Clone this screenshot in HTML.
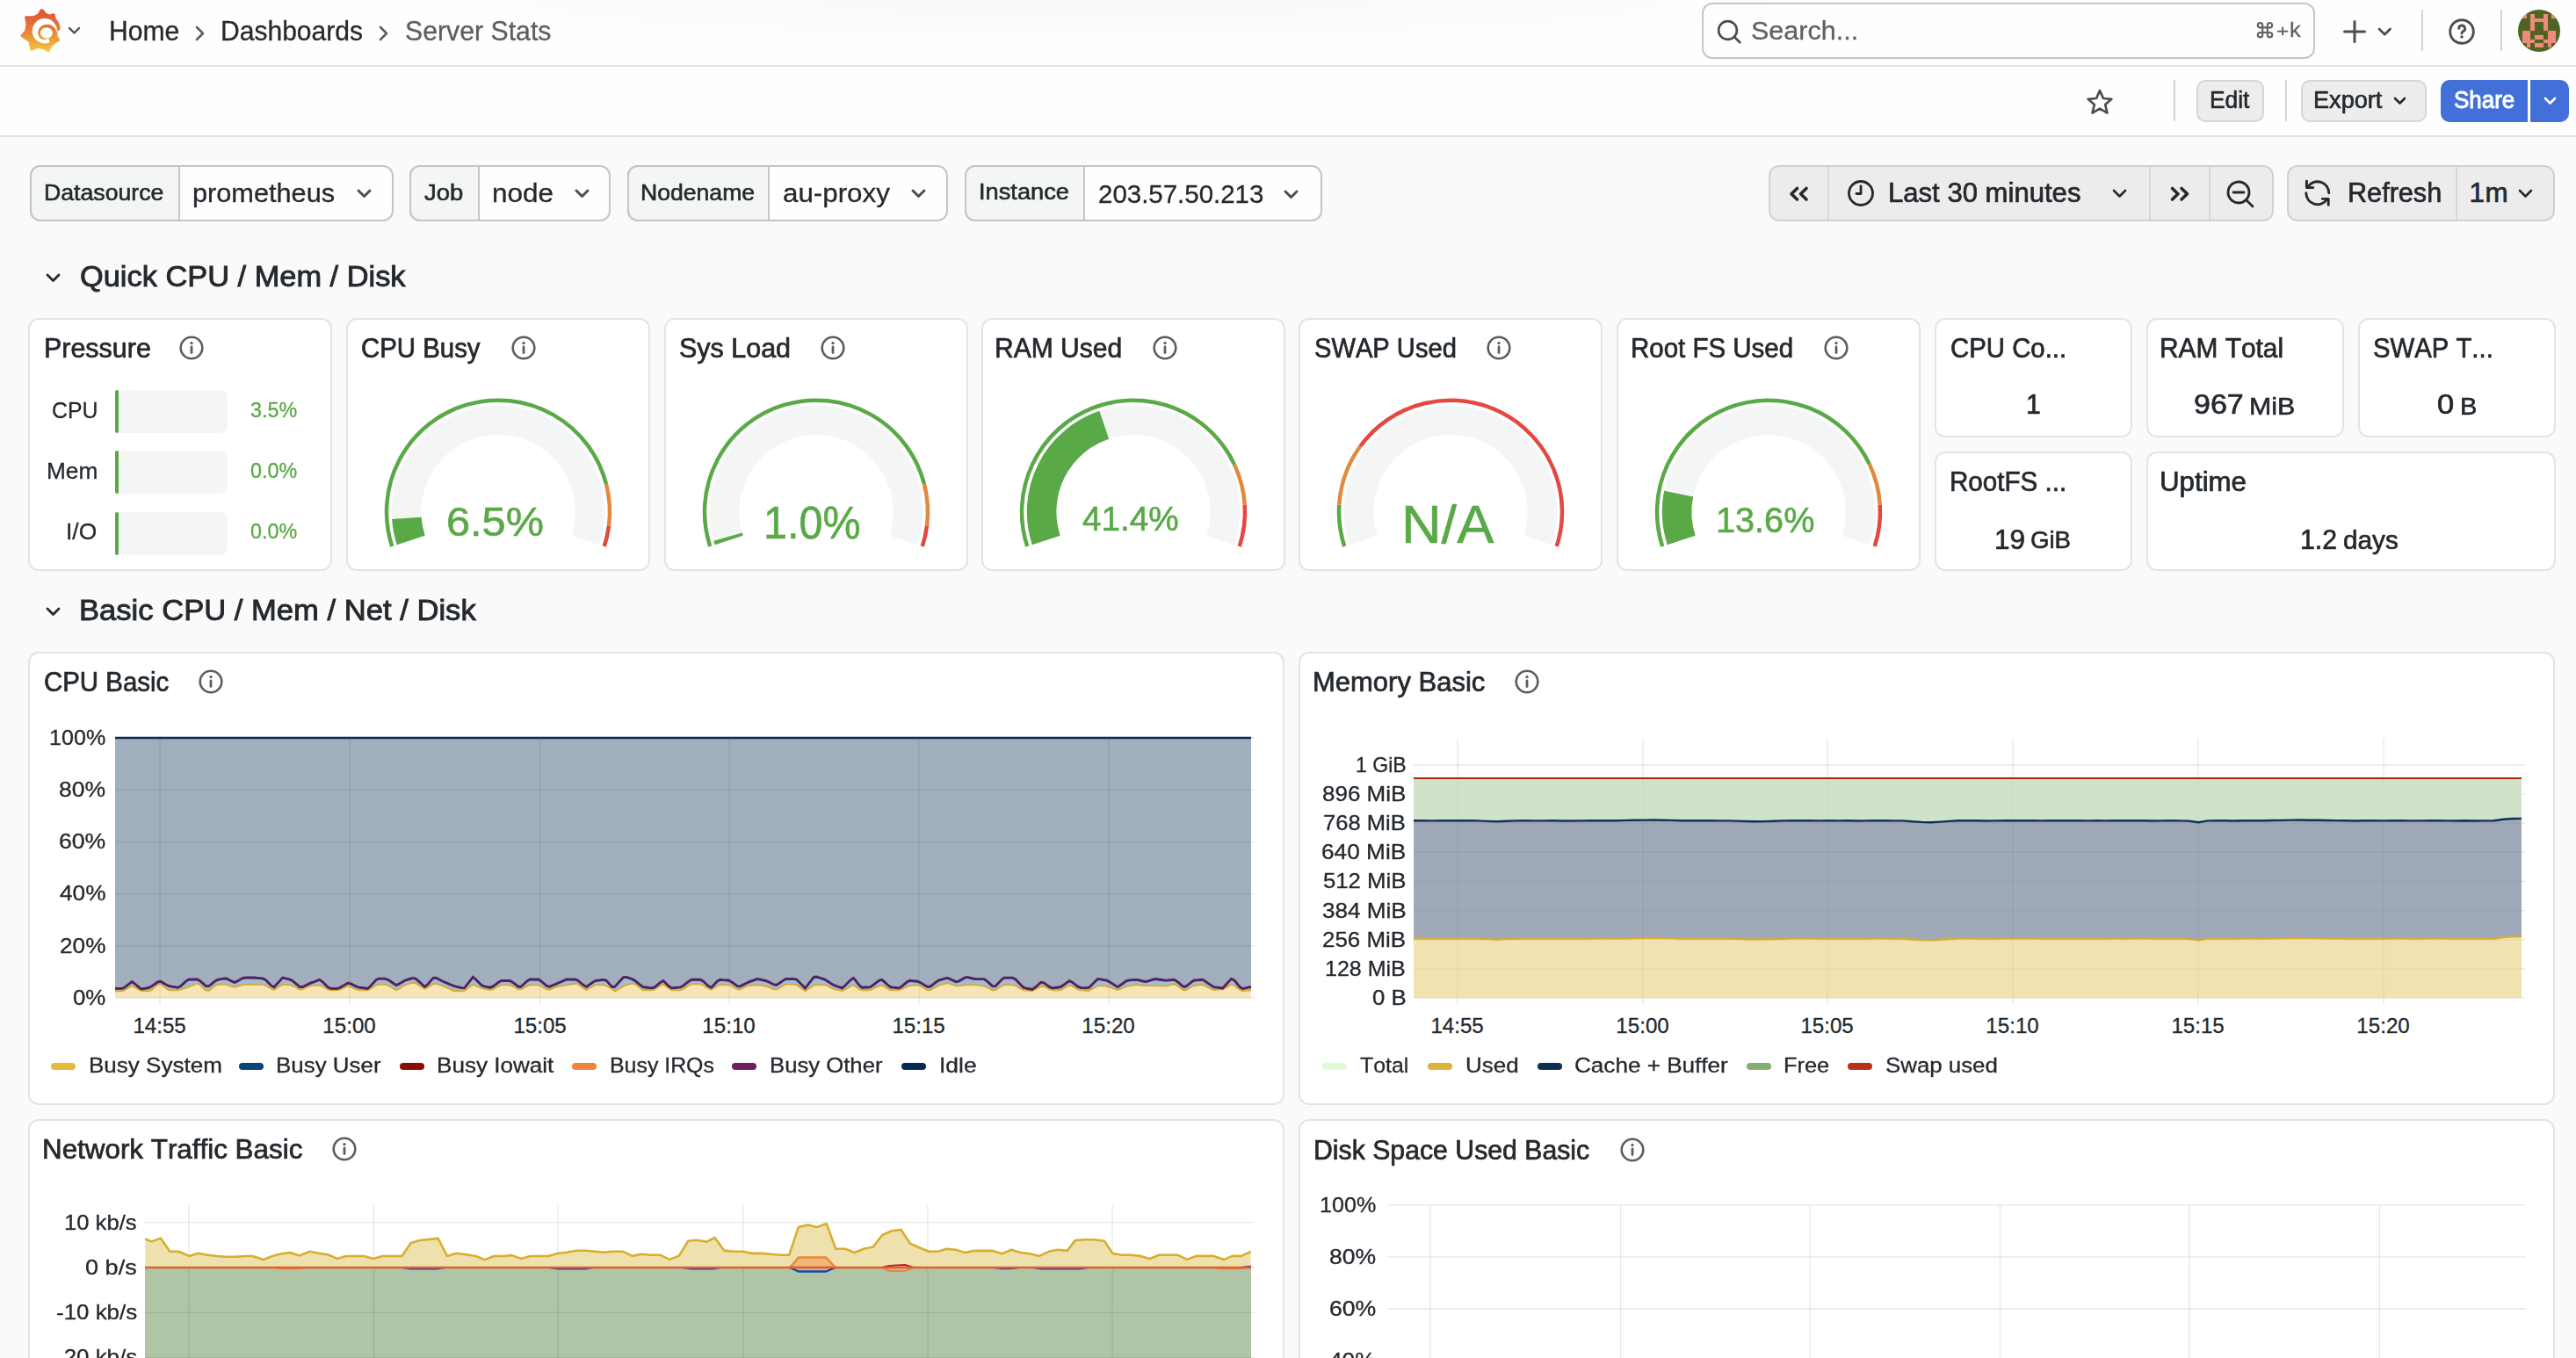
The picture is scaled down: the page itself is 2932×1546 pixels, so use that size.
<!DOCTYPE html><html><head><meta charset="utf-8"><style>
html,body{margin:0;padding:0;}
body{width:2932px;height:1546px;overflow:hidden;position:relative;background:#fafafa;font-family:"Liberation Sans",sans-serif;}
.t{position:absolute;white-space:pre;line-height:1;font-kerning:none;transform-origin:0 0;}
svg{overflow:visible}
</style></head><body>
<div style="position:absolute;left:0px;top:0px;width:2932px;height:74px;box-sizing:border-box;background:#fefefe;"></div>
<div style="position:absolute;left:0px;top:0px;width:2932px;height:74px;box-sizing:border-box;background:radial-gradient(ellipse 900px 55px at 1250px 0px, rgba(0,0,0,0.022), rgba(0,0,0,0) 100%);"></div>
<div style="position:absolute;left:0px;top:74px;width:2932px;height:2px;box-sizing:border-box;background:#e2e4e4;"></div>
<svg style="position:absolute;left:14px;top:4px;" width="80" height="66" viewBox="0 0 80 66"><defs><linearGradient id="lg" gradientUnits="userSpaceOnUse" x1="0" y1="6" x2="0" y2="56"><stop offset="0" stop-color="#e0512f"/><stop offset="0.45" stop-color="#e57a38"/><stop offset="1" stop-color="#f2cd3b"/></linearGradient>
<mask id="lm"><rect x="-10" y="-10" width="100" height="100" fill="white"/><circle cx="36.85" cy="31.25" r="14.15" fill="black"/></mask></defs><path d="M33.84,6.98 L35.83,8.37 L37.82,11.55 L42.59,13.54 L46.17,11.95 L47.76,12.35 L48.95,17.52 L51.74,21.50 L53.73,26.27 L53.53,30.04 L50.74,29.45 L50.74,37.80 L52.53,39.79 L53.33,41.77 L48.56,44.95 L43.79,48.93 L42.19,53.30 L41.00,54.50 L36.63,51.71 L29.47,50.12 L21.52,52.91 L21.12,52.51 L19.13,42.97 L10.39,37.40 L10.19,36.60 L15.16,30.64 L16.35,23.48 L14.76,15.53 L15.55,14.93 L24.70,14.74 L29.67,12.15 L32.65,7.18Z" fill="url(#lg)" stroke="url(#lg)" stroke-width="1.6" stroke-linejoin="round" mask="url(#lm)"/><path d="M43.30,45.67 L44.11,45.27 L44.90,44.83 L45.65,44.33 L46.36,43.78 L47.02,43.19 L47.64,42.55 L48.21,41.88 L48.73,41.17 L49.20,40.43 L49.61,39.66 L49.97,38.87 L50.27,38.06 L50.51,37.24 L50.69,36.40 L50.81,35.56 L50.87,34.71 L50.87,33.87 L50.78,33.03 L50.59,32.22 L50.34,31.42 L50.04,30.66 L49.69,29.93 L49.30,29.23 L48.86,28.57 L48.38,27.95 L47.86,27.37 L47.31,26.84 L46.73,26.36 L46.13,25.91 L45.53,25.48 L44.92,25.10 L44.28,24.77 L43.62,24.48 L42.95,24.24 L42.27,24.05 L41.58,23.91 L40.90,23.83 L40.21,23.78 L39.53,23.79 L38.85,23.85 L38.18,23.88 L37.52,23.96 L36.86,24.09 L36.21,24.26 L35.58,24.47 L34.97,24.73 L34.37,25.03 L33.80,25.37 L33.25,25.75 L32.74,26.16 L32.25,26.61 L31.78,27.08 L31.33,27.58 L30.92,28.10 L30.55,28.66 L30.22,29.24 L29.92,29.84 L29.67,30.47 L29.47,31.11 L29.30,31.77 L29.19,32.43 L29.12,33.11 L29.13,33.79 L29.23,34.46 L29.37,35.12 L29.56,35.77 L29.79,36.39 L30.06,37.00 L30.37,37.58 L30.72,38.14 L31.11,38.67 L31.53,39.17 L31.99,39.63 L32.49,40.04 L33.07,40.34 L33.67,40.59 L34.27,40.79 L34.87,40.94 L35.47,41.04 L36.06,41.10 L36.65,41.12 L37.23,41.09 L37.79,41.01 L38.33,40.90 L38.85,40.75 L39.35,40.57 L39.82,40.35 L40.27,40.11 L40.68,39.84 L41.07,39.54 L41.00,39.34 L40.56,39.43 L40.13,39.48 L39.70,39.50 L39.27,39.49 L38.85,39.45 L38.43,39.48 L38.00,39.48 L37.58,39.44 L37.15,39.38 L36.73,39.29 L36.31,39.16 L35.89,39.01 L35.49,38.82 L35.10,38.61 L34.72,38.37 L34.36,38.10 L34.01,37.80 L33.69,37.48 L33.39,37.14 L33.11,36.77 L32.85,36.38 L32.62,35.97 L32.42,35.54 L32.25,35.10 L32.11,34.64 L32.00,34.17 L31.93,33.69 L31.93,33.21 L32.00,32.73 L32.11,32.26 L32.25,31.80 L32.42,31.36 L32.62,30.93 L32.85,30.52 L33.11,30.13 L33.39,29.76 L33.69,29.42 L34.01,29.10 L34.36,28.80 L34.72,28.53 L35.10,28.29 L35.49,28.08 L35.89,27.89 L36.31,27.74 L36.73,27.61 L37.15,27.52 L37.58,27.46 L38.00,27.42 L38.43,27.42 L38.85,27.45 L39.27,27.42 L39.70,27.43 L40.12,27.46 L40.55,27.53 L40.97,27.62 L41.39,27.75 L41.80,27.91 L42.20,28.09 L42.59,28.30 L42.96,28.55 L43.32,28.82 L43.67,29.11 L43.99,29.44 L44.29,29.78 L44.57,30.15 L44.82,30.54 L45.04,30.95 L45.24,31.37 L45.41,31.81 L45.55,32.27 L45.65,32.74 L45.73,33.21 L45.73,33.69 L45.66,34.17 L45.56,34.63 L45.43,35.09 L45.27,35.53 L45.07,35.96 L44.85,36.38 L44.60,36.77 L44.33,37.15 L44.03,37.50 L43.71,37.83 L43.37,38.13 L43.01,38.41 L42.63,38.66 L42.24,38.88 L41.84,39.07 L41.43,39.24 L41.00,39.37Z" fill="url(#lg)"/></svg>
<svg style="position:absolute;left:75.5px;top:29.25px;" width="17" height="11.5" viewBox="0 0 17 11.5"><polyline points="3,3 8.5,8.5 14,3" fill="none" stroke="#4a4e52" stroke-width="2.4" stroke-linecap="round" stroke-linejoin="round"/></svg>
<span class="t" style="left:123.53px;top:20.26px;font-size:30.52px;color:#24292e;transform:scaleX(0.9863);-webkit-text-stroke:0.30px #24292e;">Home</span>
<svg style="position:absolute;left:220px;top:28px;" width="16" height="20" viewBox="0 0 16 20"><polyline points="4,3 11,10 4,17" fill="none" stroke="#5a5e62" stroke-width="2.6" stroke-linecap="round" stroke-linejoin="round"/></svg>
<span class="t" style="left:251.03px;top:20.26px;font-size:30.52px;color:#24292e;transform:scaleX(0.9846);-webkit-text-stroke:0.30px #24292e;">Dashboards</span>
<svg style="position:absolute;left:429px;top:28px;" width="16" height="20" viewBox="0 0 16 20"><polyline points="4,3 11,10 4,17" fill="none" stroke="#5a5e62" stroke-width="2.6" stroke-linecap="round" stroke-linejoin="round"/></svg>
<span class="t" style="left:460.63px;top:20.26px;font-size:30.52px;color:#5a5e62;transform:scaleX(0.9912);-webkit-text-stroke:0.30px #5a5e62;">Server Stats</span>
<div style="position:absolute;left:1937px;top:3px;width:698px;height:64px;box-sizing:border-box;border:2px solid #c4c6c8;border-radius:12px;background:#fefefe;"></div>
<svg style="position:absolute;left:1950px;top:18px;" width="36" height="36" viewBox="0 0 36 36"><circle cx="16.5" cy="16.5" r="10.4" fill="none" stroke="#4a4e53" stroke-width="2.7"/><line x1="24" y1="24" x2="30.3" y2="30.3" stroke="#4a4e53" stroke-width="2.7" stroke-linecap="round"/></svg>
<span class="t" style="left:1992.61px;top:20.30px;font-size:30.23px;color:#5e6266;transform:scaleX(1.0098);-webkit-text-stroke:0.30px #5e6266;">Search...</span>
<svg style="position:absolute;left:2566px;top:22px;" width="24" height="24" viewBox="0 0 24 24"><path d="M9.2,9.4 L14.8,9.4 L14.8,15.0 L9.2,15.0 Z M9.2,9.4 L9.2,6.7 A2.7,2.7 0 1 0 6.499999999999999,9.4 Z M14.8,9.4 L14.8,6.7 A2.7,2.7 0 1 1 17.5,9.4 Z M9.2,15.0 L9.2,17.7 A2.7,2.7 0 1 1 6.499999999999999,15.0 Z M14.8,15.0 L14.8,17.7 A2.7,2.7 0 1 0 17.5,15.0 Z" fill="none" stroke="#5e6266" stroke-width="2.1"/></svg>
<span class="t" style="left:2590.81px;top:27.73px;font-size:17.44px;color:#5e6266;transform:scaleX(1.3925);-webkit-text-stroke:0.30px #5e6266;">+</span>
<span class="t" style="left:2606.29px;top:22.25px;font-size:24.27px;color:#5e6266;transform:scaleX(1.0440);-webkit-text-stroke:0.30px #5e6266;">k</span>
<svg style="position:absolute;left:2664px;top:20px;" width="32" height="32" viewBox="0 0 32 32"><line x1="16" y1="4.5" x2="16" y2="27.5" stroke="#4a4e53" stroke-width="3" stroke-linecap="round"/><line x1="4.5" y1="16" x2="27.5" y2="16" stroke="#4a4e53" stroke-width="3" stroke-linecap="round"/></svg>
<svg style="position:absolute;left:2704.75px;top:29.875px;" width="18.5" height="12.25" viewBox="0 0 18.5 12.25"><polyline points="3,3 9.25,9.25 15.5,3" fill="none" stroke="#4a4e53" stroke-width="2.8" stroke-linecap="round" stroke-linejoin="round"/></svg>
<div style="position:absolute;left:2756px;top:11px;width:2px;height:47px;box-sizing:border-box;background:#d2d4d6;"></div>
<svg style="position:absolute;left:2786px;top:20px;" width="32" height="32" viewBox="0 0 32 32"><circle cx="16" cy="16" r="13.3" fill="none" stroke="#4a4e53" stroke-width="2.9"/><path d="M12.6,12.4 a3.5,3.5 0 1 1 4.9,3.3 c-1,0.5 -1.5,1 -1.5,2.4" fill="none" stroke="#4a4e53" stroke-width="2.9" stroke-linecap="round"/><circle cx="16" cy="22" r="1.8" fill="#4a4e53"/></svg>
<div style="position:absolute;left:2846px;top:11px;width:2px;height:47px;box-sizing:border-box;background:#d2d4d6;"></div>
<svg style="position:absolute;left:2866px;top:11px;" width="48" height="48" viewBox="0 0 48 48"><defs><clipPath id="avc"><circle cx="24" cy="24" r="24"/></clipPath></defs><g clip-path="url(#avc)"><rect width="48" height="48" fill="#4f6420"/><rect x="4.80" y="4.80" width="4.8" height="4.8" fill="#ee8a7c" shape-rendering="crispEdges"/><rect x="14.40" y="4.80" width="4.8" height="4.8" fill="#ee8a7c" shape-rendering="crispEdges"/><rect x="28.80" y="4.80" width="4.8" height="4.8" fill="#ee8a7c" shape-rendering="crispEdges"/><rect x="38.40" y="4.80" width="4.8" height="4.8" fill="#ee8a7c" shape-rendering="crispEdges"/><rect x="14.40" y="9.60" width="4.8" height="4.8" fill="#ee8a7c" shape-rendering="crispEdges"/><rect x="19.20" y="9.60" width="4.8" height="4.8" fill="#ee8a7c" shape-rendering="crispEdges"/><rect x="24.00" y="9.60" width="4.8" height="4.8" fill="#ee8a7c" shape-rendering="crispEdges"/><rect x="28.80" y="9.60" width="4.8" height="4.8" fill="#ee8a7c" shape-rendering="crispEdges"/><rect x="14.40" y="14.40" width="4.8" height="4.8" fill="#ee8a7c" shape-rendering="crispEdges"/><rect x="28.80" y="14.40" width="4.8" height="4.8" fill="#ee8a7c" shape-rendering="crispEdges"/><rect x="14.40" y="19.20" width="4.8" height="4.8" fill="#ee8a7c" shape-rendering="crispEdges"/><rect x="28.80" y="19.20" width="4.8" height="4.8" fill="#ee8a7c" shape-rendering="crispEdges"/><rect x="4.80" y="24.00" width="4.8" height="4.8" fill="#ee8a7c" shape-rendering="crispEdges"/><rect x="9.60" y="24.00" width="4.8" height="4.8" fill="#ee8a7c" shape-rendering="crispEdges"/><rect x="33.60" y="24.00" width="4.8" height="4.8" fill="#ee8a7c" shape-rendering="crispEdges"/><rect x="38.40" y="24.00" width="4.8" height="4.8" fill="#ee8a7c" shape-rendering="crispEdges"/><rect x="4.80" y="28.80" width="4.8" height="4.8" fill="#ee8a7c" shape-rendering="crispEdges"/><rect x="9.60" y="28.80" width="4.8" height="4.8" fill="#ee8a7c" shape-rendering="crispEdges"/><rect x="19.20" y="28.80" width="4.8" height="4.8" fill="#ee8a7c" shape-rendering="crispEdges"/><rect x="24.00" y="28.80" width="4.8" height="4.8" fill="#ee8a7c" shape-rendering="crispEdges"/><rect x="33.60" y="28.80" width="4.8" height="4.8" fill="#ee8a7c" shape-rendering="crispEdges"/><rect x="38.40" y="28.80" width="4.8" height="4.8" fill="#ee8a7c" shape-rendering="crispEdges"/><rect x="4.80" y="33.60" width="4.8" height="4.8" fill="#ee8a7c" shape-rendering="crispEdges"/><rect x="9.60" y="33.60" width="4.8" height="4.8" fill="#ee8a7c" shape-rendering="crispEdges"/><rect x="14.40" y="33.60" width="4.8" height="4.8" fill="#ee8a7c" shape-rendering="crispEdges"/><rect x="28.80" y="33.60" width="4.8" height="4.8" fill="#ee8a7c" shape-rendering="crispEdges"/><rect x="33.60" y="33.60" width="4.8" height="4.8" fill="#ee8a7c" shape-rendering="crispEdges"/><rect x="38.40" y="33.60" width="4.8" height="4.8" fill="#ee8a7c" shape-rendering="crispEdges"/><rect x="9.60" y="38.40" width="4.8" height="4.8" fill="#ee8a7c" shape-rendering="crispEdges"/><rect x="19.20" y="38.40" width="4.8" height="4.8" fill="#ee8a7c" shape-rendering="crispEdges"/><rect x="24.00" y="38.40" width="4.8" height="4.8" fill="#ee8a7c" shape-rendering="crispEdges"/><rect x="33.60" y="38.40" width="4.8" height="4.8" fill="#ee8a7c" shape-rendering="crispEdges"/></g></svg>
<div style="position:absolute;left:0px;top:76px;width:2932px;height:78px;box-sizing:border-box;background:#fefefe;"></div>
<div style="position:absolute;left:0px;top:154px;width:2932px;height:2px;box-sizing:border-box;background:#e2e4e4;"></div>
<svg style="position:absolute;left:2369px;top:97px;" width="42" height="40" viewBox="0 0 42 40"><g transform="translate(21,19) scale(0.86) translate(-21,-19)"><path d="M21,4 L25.6,14.3 L36.6,15.3 L28.2,22.6 L30.8,33.6 L21,27.8 L11.2,33.6 L13.8,22.6 L5.4,15.3 L16.4,14.3 Z" fill="none" stroke="#4a4e53" stroke-width="3.1" stroke-linejoin="round"/></g></svg>
<div style="position:absolute;left:2474px;top:91px;width:2px;height:47px;box-sizing:border-box;background:#d2d4d6;"></div>
<div style="position:absolute;left:2500px;top:91px;width:77px;height:48px;box-sizing:border-box;background:#ededed;border:2px solid #d5d6d7;border-radius:10px;"></div>
<span class="t" style="left:2514.84px;top:100.76px;font-size:26.74px;color:#24292e;transform:scaleX(0.9841);-webkit-text-stroke:0.59px #24292e;">Edit</span>
<div style="position:absolute;left:2601px;top:91px;width:2px;height:47px;box-sizing:border-box;background:#d2d4d6;"></div>
<div style="position:absolute;left:2619px;top:91px;width:143px;height:48px;box-sizing:border-box;background:#ededed;border:2px solid #d5d6d7;border-radius:10px;"></div>
<span class="t" style="left:2632.77px;top:100.76px;font-size:26.74px;color:#24292e;transform:scaleX(1.0146);-webkit-text-stroke:0.59px #24292e;">Export</span>
<svg style="position:absolute;left:2723.0px;top:109.25px;" width="17" height="11.5" viewBox="0 0 17 11.5"><polyline points="3,3 8.5,8.5 14,3" fill="none" stroke="#24292e" stroke-width="2.6" stroke-linecap="round" stroke-linejoin="round"/></svg>
<div style="position:absolute;left:2778px;top:91px;width:146px;height:48px;box-sizing:border-box;background:#4270d8;border-radius:10px;"></div>
<div style="position:absolute;left:2877px;top:91px;width:3px;height:48px;box-sizing:border-box;background:#fefefe;"></div>
<span class="t" style="left:2792.82px;top:100.76px;font-size:26.74px;color:#ffffff;transform:scaleX(0.9715);-webkit-text-stroke:0.90px #ffffff;">Share</span>
<svg style="position:absolute;left:2894.0px;top:109.25px;" width="17" height="11.5" viewBox="0 0 17 11.5"><polyline points="3,3 8.5,8.5 14,3" fill="none" stroke="#ffffff" stroke-width="2.6" stroke-linecap="round" stroke-linejoin="round"/></svg>
<div style="position:absolute;left:0px;top:156px;width:2932px;height:1390px;box-sizing:border-box;background:#fafafa;"></div>
<div style="position:absolute;left:34px;top:188px;width:414px;height:64px;box-sizing:border-box;border:2px solid #c3c5c7;border-radius:12px;background:#fefefe;"></div>
<div style="position:absolute;left:34px;top:188px;width:171px;height:64px;box-sizing:border-box;border:2px solid #c3c5c7;border-radius:12px 0 0 12px;background:#f4f5f5;"></div>
<span class="t" style="left:50.31px;top:206.89px;font-size:25.29px;color:#24292e;transform:scaleX(1.0544);-webkit-text-stroke:0.56px #24292e;">Datasource</span>
<span class="t" style="left:219.02px;top:205.27px;font-size:29.80px;color:#24292e;transform:scaleX(1.0301);-webkit-text-stroke:0.30px #24292e;">prometheus</span>
<svg style="position:absolute;left:404.5px;top:213.75px;" width="19" height="12.5" viewBox="0 0 19 12.5"><polyline points="3,3 9.5,9.5 16,3" fill="none" stroke="#4a4e53" stroke-width="3" stroke-linecap="round" stroke-linejoin="round"/></svg>
<div style="position:absolute;left:466px;top:188px;width:229px;height:64px;box-sizing:border-box;border:2px solid #c3c5c7;border-radius:12px;background:#fefefe;"></div>
<div style="position:absolute;left:466px;top:188px;width:80px;height:64px;box-sizing:border-box;border:2px solid #c3c5c7;border-radius:12px 0 0 12px;background:#f4f5f5;"></div>
<span class="t" style="left:483.37px;top:206.89px;font-size:25.29px;color:#24292e;transform:scaleX(1.0860);-webkit-text-stroke:0.56px #24292e;">Job</span>
<span class="t" style="left:559.91px;top:205.27px;font-size:29.80px;color:#24292e;transform:scaleX(1.0558);-webkit-text-stroke:0.30px #24292e;">node</span>
<svg style="position:absolute;left:653.0px;top:213.75px;" width="19" height="12.5" viewBox="0 0 19 12.5"><polyline points="3,3 9.5,9.5 16,3" fill="none" stroke="#4a4e53" stroke-width="3" stroke-linecap="round" stroke-linejoin="round"/></svg>
<div style="position:absolute;left:714px;top:188px;width:365px;height:64px;box-sizing:border-box;border:2px solid #c3c5c7;border-radius:12px;background:#fefefe;"></div>
<div style="position:absolute;left:714px;top:188px;width:162px;height:64px;box-sizing:border-box;border:2px solid #c3c5c7;border-radius:12px 0 0 12px;background:#f4f5f5;"></div>
<span class="t" style="left:729.22px;top:206.89px;font-size:25.29px;color:#24292e;transform:scaleX(1.0520);-webkit-text-stroke:0.56px #24292e;">Nodename</span>
<span class="t" style="left:891.07px;top:205.27px;font-size:29.80px;color:#24292e;transform:scaleX(1.0506);-webkit-text-stroke:0.30px #24292e;">au-proxy</span>
<svg style="position:absolute;left:1036.0px;top:213.75px;" width="19" height="12.5" viewBox="0 0 19 12.5"><polyline points="3,3 9.5,9.5 16,3" fill="none" stroke="#4a4e53" stroke-width="3" stroke-linecap="round" stroke-linejoin="round"/></svg>
<div style="position:absolute;left:1098px;top:188px;width:407px;height:64px;box-sizing:border-box;border:2px solid #c3c5c7;border-radius:12px;background:#fefefe;"></div>
<div style="position:absolute;left:1098px;top:188px;width:137px;height:64px;box-sizing:border-box;border:2px solid #c3c5c7;border-radius:12px 0 0 12px;background:#f4f5f5;"></div>
<span class="t" style="left:1113.88px;top:206.49px;font-size:25.29px;color:#24292e;transform:scaleX(1.0776);-webkit-text-stroke:0.56px #24292e;">Instance</span>
<span class="t" style="left:1249.92px;top:206.17px;font-size:29.80px;color:#24292e;transform:scaleX(0.9886);-webkit-text-stroke:0.30px #24292e;">203.57.50.213</span>
<svg style="position:absolute;left:1460.0px;top:214.75px;" width="19" height="12.5" viewBox="0 0 19 12.5"><polyline points="3,3 9.5,9.5 16,3" fill="none" stroke="#4a4e53" stroke-width="3" stroke-linecap="round" stroke-linejoin="round"/></svg>
<div style="position:absolute;left:2013px;top:188px;width:575px;height:64px;box-sizing:border-box;border:2px solid #cfd1d2;border-radius:12px;background:#ececed;"></div>
<div style="position:absolute;left:2080px;top:190px;width:2px;height:60px;box-sizing:border-box;background:#d5d7d8;"></div>
<div style="position:absolute;left:2446px;top:190px;width:2px;height:60px;box-sizing:border-box;background:#d5d7d8;"></div>
<div style="position:absolute;left:2514px;top:190px;width:2px;height:60px;box-sizing:border-box;background:#d5d7d8;"></div>
<svg style="position:absolute;left:2030px;top:204px;" width="36" height="34" viewBox="0 0 36 34"><polyline points="15.5,10.5 9,16.8 15.5,23" fill="none" stroke="#24292e" stroke-width="3.6" stroke-linecap="round" stroke-linejoin="round"/><polyline points="26,10.5 19.5,16.8 26,23" fill="none" stroke="#24292e" stroke-width="3.6" stroke-linecap="round" stroke-linejoin="round"/></svg>
<svg style="position:absolute;left:2100px;top:202px;" width="36" height="36" viewBox="0 0 36 36"><circle cx="18" cy="18" r="13.5" fill="none" stroke="#24292e" stroke-width="2.8"/><polyline points="18,10 18,18.5 13,18.5" fill="none" stroke="#24292e" stroke-width="2.8" stroke-linecap="round" stroke-linejoin="round"/></svg>
<span class="t" style="left:2149.15px;top:203.62px;font-size:31.40px;color:#24292e;transform:scaleX(0.9902);-webkit-text-stroke:0.69px #24292e;">Last 30 minutes</span>
<svg style="position:absolute;left:2402.5px;top:213.75px;" width="19" height="12.5" viewBox="0 0 19 12.5"><polyline points="3,3 9.5,9.5 16,3" fill="none" stroke="#24292e" stroke-width="2.6" stroke-linecap="round" stroke-linejoin="round"/></svg>
<svg style="position:absolute;left:2462px;top:204px;" width="36" height="34" viewBox="0 0 36 34"><polyline points="10.5,10.5 17,16.8 10.5,23" fill="none" stroke="#24292e" stroke-width="3.6" stroke-linecap="round" stroke-linejoin="round"/><polyline points="21,10.5 27.5,16.8 21,23" fill="none" stroke="#24292e" stroke-width="3.6" stroke-linecap="round" stroke-linejoin="round"/></svg>
<svg style="position:absolute;left:2532px;top:203px;" width="38" height="38" viewBox="0 0 38 38"><circle cx="16" cy="16" r="12" fill="none" stroke="#24292e" stroke-width="2.8"/><line x1="10" y1="16" x2="22" y2="16" stroke="#24292e" stroke-width="2.8" stroke-linecap="round"/><line x1="25" y1="25" x2="32" y2="32" stroke="#24292e" stroke-width="2.8" stroke-linecap="round"/></svg>
<div style="position:absolute;left:2603px;top:188px;width:305px;height:64px;box-sizing:border-box;border:2px solid #cfd1d2;border-radius:12px;background:#ececed;"></div>
<div style="position:absolute;left:2795px;top:190px;width:2px;height:60px;box-sizing:border-box;background:#d5d7d8;"></div>
<svg style="position:absolute;left:2620px;top:202px;" width="38" height="38" viewBox="0 0 38 38"><path d="M7.15,10.34 A13,13 0 0 1 30.8,17.8" fill="none" stroke="#24292e" stroke-width="2.9" stroke-linecap="round"/><polyline points="5.4,4.2 5.4,11.6 12.8,11.6" fill="none" stroke="#24292e" stroke-width="2.9" stroke-linecap="round" stroke-linejoin="round"/><path d="M4.8,17.8 A13,13 0 0 0 28.45,25.26" fill="none" stroke="#24292e" stroke-width="2.9" stroke-linecap="round"/><polyline points="23.4,24.4 30.2,24.4 30.2,31.4" fill="none" stroke="#24292e" stroke-width="2.9" stroke-linecap="round" stroke-linejoin="round"/></svg>
<span class="t" style="left:2671.79px;top:203.62px;font-size:31.40px;color:#24292e;transform:scaleX(0.9751);-webkit-text-stroke:0.69px #24292e;">Refresh</span>
<span class="t" style="left:2810.61px;top:203.62px;font-size:31.40px;color:#24292e;-webkit-text-stroke:0.69px #24292e;">1</span>
<span class="t" style="left:2828.42px;top:203.62px;font-size:31.40px;color:#24292e;-webkit-text-stroke:0.69px #24292e;">m</span>
<svg style="position:absolute;left:2865.0px;top:213.75px;" width="19" height="12.5" viewBox="0 0 19 12.5"><polyline points="3,3 9.5,9.5 16,3" fill="none" stroke="#24292e" stroke-width="2.6" stroke-linecap="round" stroke-linejoin="round"/></svg>
<svg style="position:absolute;left:50.7px;top:309.84999999999997px;" width="19" height="12.5" viewBox="0 0 19 12.5"><polyline points="3,3 9.5,9.5 16,3" fill="none" stroke="#24292e" stroke-width="2.8" stroke-linecap="round" stroke-linejoin="round"/></svg>
<span class="t" style="left:91.37px;top:298.22px;font-size:33.87px;color:#24292e;transform:scaleX(1.0152);-webkit-text-stroke:0.90px #24292e;">Quick CPU / Mem / Disk</span>
<svg style="position:absolute;left:50.7px;top:689.6500000000001px;" width="19" height="12.5" viewBox="0 0 19 12.5"><polyline points="3,3 9.5,9.5 16,3" fill="none" stroke="#24292e" stroke-width="2.8" stroke-linecap="round" stroke-linejoin="round"/></svg>
<span class="t" style="left:90.16px;top:678.02px;font-size:33.87px;color:#24292e;transform:scaleX(1.0216);-webkit-text-stroke:0.90px #24292e;">Basic CPU / Mem / Net / Disk</span>
<div style="position:absolute;left:32px;top:362px;width:346px;height:288px;box-sizing:border-box;background:#ffffff;border:2px solid #e3e4e5;border-radius:12px;"></div>
<div style="position:absolute;left:394px;top:362px;width:346px;height:288px;box-sizing:border-box;background:#ffffff;border:2px solid #e3e4e5;border-radius:12px;"></div>
<div style="position:absolute;left:756px;top:362px;width:346px;height:288px;box-sizing:border-box;background:#ffffff;border:2px solid #e3e4e5;border-radius:12px;"></div>
<div style="position:absolute;left:1117px;top:362px;width:346px;height:288px;box-sizing:border-box;background:#ffffff;border:2px solid #e3e4e5;border-radius:12px;"></div>
<div style="position:absolute;left:1478px;top:362px;width:346px;height:288px;box-sizing:border-box;background:#ffffff;border:2px solid #e3e4e5;border-radius:12px;"></div>
<div style="position:absolute;left:1840px;top:362px;width:346px;height:288px;box-sizing:border-box;background:#ffffff;border:2px solid #e3e4e5;border-radius:12px;"></div>
<div style="position:absolute;left:2202px;top:362px;width:225px;height:136px;box-sizing:border-box;background:#ffffff;border:2px solid #e3e4e5;border-radius:12px;"></div>
<div style="position:absolute;left:2443px;top:362px;width:225px;height:136px;box-sizing:border-box;background:#ffffff;border:2px solid #e3e4e5;border-radius:12px;"></div>
<div style="position:absolute;left:2684px;top:362px;width:225px;height:136px;box-sizing:border-box;background:#ffffff;border:2px solid #e3e4e5;border-radius:12px;"></div>
<div style="position:absolute;left:2202px;top:514px;width:225px;height:136px;box-sizing:border-box;background:#ffffff;border:2px solid #e3e4e5;border-radius:12px;"></div>
<div style="position:absolute;left:2443px;top:514px;width:466px;height:136px;box-sizing:border-box;background:#ffffff;border:2px solid #e3e4e5;border-radius:12px;"></div>
<span class="t" style="left:49.50px;top:381.16px;font-size:30.52px;color:#24292e;transform:scaleX(0.9976);-webkit-text-stroke:0.70px #24292e;">Pressure</span>
<svg style="position:absolute;left:202px;top:380px;" width="32" height="32" viewBox="0 0 32 32"><circle cx="16" cy="16" r="12.3" fill="none" stroke="#5a5e62" stroke-width="2.6"/><line x1="16" y1="15" x2="16" y2="21.5" stroke="#5a5e62" stroke-width="2.8" stroke-linecap="round"/><circle cx="16" cy="10.6" r="1.7" fill="#5a5e62"/></svg>
<span class="t" style="left:411.01px;top:381.16px;font-size:30.52px;color:#24292e;transform:scaleX(0.9628);-webkit-text-stroke:0.70px #24292e;">CPU Busy</span>
<svg style="position:absolute;left:579.5px;top:380px;" width="32" height="32" viewBox="0 0 32 32"><circle cx="16" cy="16" r="12.3" fill="none" stroke="#5a5e62" stroke-width="2.6"/><line x1="16" y1="15" x2="16" y2="21.5" stroke="#5a5e62" stroke-width="2.8" stroke-linecap="round"/><circle cx="16" cy="10.6" r="1.7" fill="#5a5e62"/></svg>
<span class="t" style="left:773.12px;top:381.16px;font-size:30.52px;color:#24292e;transform:scaleX(0.9983);-webkit-text-stroke:0.70px #24292e;">Sys Load</span>
<svg style="position:absolute;left:931.7px;top:380px;" width="32" height="32" viewBox="0 0 32 32"><circle cx="16" cy="16" r="12.3" fill="none" stroke="#5a5e62" stroke-width="2.6"/><line x1="16" y1="15" x2="16" y2="21.5" stroke="#5a5e62" stroke-width="2.8" stroke-linecap="round"/><circle cx="16" cy="10.6" r="1.7" fill="#5a5e62"/></svg>
<span class="t" style="left:1132.34px;top:381.16px;font-size:30.52px;color:#24292e;transform:scaleX(0.9833);-webkit-text-stroke:0.70px #24292e;">RAM Used</span>
<svg style="position:absolute;left:1310px;top:380px;" width="32" height="32" viewBox="0 0 32 32"><circle cx="16" cy="16" r="12.3" fill="none" stroke="#5a5e62" stroke-width="2.6"/><line x1="16" y1="15" x2="16" y2="21.5" stroke="#5a5e62" stroke-width="2.8" stroke-linecap="round"/><circle cx="16" cy="10.6" r="1.7" fill="#5a5e62"/></svg>
<span class="t" style="left:1495.58px;top:381.16px;font-size:30.52px;color:#24292e;transform:scaleX(0.9545);-webkit-text-stroke:0.70px #24292e;">SWAP Used</span>
<svg style="position:absolute;left:1689.5px;top:380px;" width="32" height="32" viewBox="0 0 32 32"><circle cx="16" cy="16" r="12.3" fill="none" stroke="#5a5e62" stroke-width="2.6"/><line x1="16" y1="15" x2="16" y2="21.5" stroke="#5a5e62" stroke-width="2.8" stroke-linecap="round"/><circle cx="16" cy="10.6" r="1.7" fill="#5a5e62"/></svg>
<span class="t" style="left:1856.38px;top:381.16px;font-size:30.52px;color:#24292e;transform:scaleX(0.9657);-webkit-text-stroke:0.70px #24292e;">Root FS Used</span>
<svg style="position:absolute;left:2073.5px;top:380px;" width="32" height="32" viewBox="0 0 32 32"><circle cx="16" cy="16" r="12.3" fill="none" stroke="#5a5e62" stroke-width="2.6"/><line x1="16" y1="15" x2="16" y2="21.5" stroke="#5a5e62" stroke-width="2.8" stroke-linecap="round"/><circle cx="16" cy="10.6" r="1.7" fill="#5a5e62"/></svg>
<span class="t" style="left:2219.51px;top:381.16px;font-size:30.52px;color:#24292e;transform:scaleX(0.9620);-webkit-text-stroke:0.70px #24292e;">CPU Co...</span>
<span class="t" style="left:2458.35px;top:381.16px;font-size:30.52px;color:#24292e;transform:scaleX(0.9784);-webkit-text-stroke:0.70px #24292e;">RAM Total</span>
<span class="t" style="left:2701.17px;top:381.16px;font-size:30.52px;color:#24292e;transform:scaleX(0.9604);-webkit-text-stroke:0.70px #24292e;">SWAP T...</span>
<span class="t" style="left:2218.57px;top:532.86px;font-size:30.52px;color:#24292e;transform:scaleX(0.9689);-webkit-text-stroke:0.70px #24292e;">RootFS ...</span>
<span class="t" style="left:2458.39px;top:532.86px;font-size:30.52px;color:#24292e;transform:scaleX(1.0240);-webkit-text-stroke:0.70px #24292e;">Uptime</span>
<span class="t" style="left:58.54px;top:455.36px;font-size:25.44px;color:#24292e;transform:scaleX(0.9772);-webkit-text-stroke:0.30px #24292e;">CPU</span>
<div style="position:absolute;left:131px;top:444px;width:128px;height:49px;box-sizing:border-box;background:#f4f5f5;border-radius:4px 8px 8px 4px;"></div>
<div style="position:absolute;left:131px;top:444px;width:4px;height:49px;box-sizing:border-box;background:#5aa947;border-radius:2px;"></div>
<span class="t" style="left:284.91px;top:456.36px;font-size:23.55px;color:#5aa947;transform:scaleX(0.9897);-webkit-text-stroke:0.30px #5aa947;">3.5%</span>
<span class="t" style="left:52.55px;top:524.16px;font-size:25.44px;color:#24292e;transform:scaleX(1.0311);-webkit-text-stroke:0.30px #24292e;">Mem</span>
<div style="position:absolute;left:131px;top:513px;width:128px;height:49px;box-sizing:border-box;background:#f4f5f5;border-radius:4px 8px 8px 4px;"></div>
<div style="position:absolute;left:131px;top:513px;width:4px;height:49px;box-sizing:border-box;background:#5aa947;border-radius:2px;"></div>
<span class="t" style="left:284.89px;top:525.16px;font-size:23.55px;color:#5aa947;transform:scaleX(0.9902);-webkit-text-stroke:0.30px #5aa947;">0.0%</span>
<span class="t" style="left:75.16px;top:593.26px;font-size:25.44px;color:#24292e;transform:scaleX(1.0377);-webkit-text-stroke:0.30px #24292e;">I/O</span>
<div style="position:absolute;left:131px;top:583px;width:128px;height:49px;box-sizing:border-box;background:#f4f5f5;border-radius:4px 8px 8px 4px;"></div>
<div style="position:absolute;left:131px;top:583px;width:4px;height:49px;box-sizing:border-box;background:#5aa947;border-radius:2px;"></div>
<span class="t" style="left:284.89px;top:594.26px;font-size:23.55px;color:#5aa947;transform:scaleX(0.9902);-webkit-text-stroke:0.30px #5aa947;">0.0%</span>
<svg style="position:absolute;left:427px;top:442px;" width="280" height="200" viewBox="0 0 280 200"><path d="M19.22,179.95 A127.0,127.0 0 1 1 263.01,109.12" fill="none" stroke="#5aa947" stroke-width="4.5"/><path d="M263.01,109.12 A127.0,127.0 0 0 1 266.00,156.62" fill="none" stroke="#e2893d" stroke-width="4.5"/><path d="M266.00,156.62 A127.0,127.0 0 0 1 260.78,179.95" fill="none" stroke="#e34841" stroke-width="4.5"/><path d="M40.71,172.96 A104.4,104.4 0 1 1 239.29,172.96" fill="none" stroke="#f4f5f5" stroke-width="33.6"/><path d="M40.71,172.96 A104.4,104.4 0 0 1 35.85,147.91" fill="none" stroke="#5aa947" stroke-width="33.6"/></svg>
<span class="t" style="left:508.03px;top:571.25px;font-size:46.95px;color:#5aa947;transform:scaleX(1.0374);-webkit-text-stroke:0.60px #5aa947;">6.5%</span>
<svg style="position:absolute;left:789px;top:442px;" width="280" height="200" viewBox="0 0 280 200"><path d="M19.22,179.95 A127.0,127.0 0 1 1 263.01,109.12" fill="none" stroke="#5aa947" stroke-width="4.5"/><path d="M263.01,109.12 A127.0,127.0 0 0 1 266.00,156.62" fill="none" stroke="#e2893d" stroke-width="4.5"/><path d="M266.00,156.62 A127.0,127.0 0 0 1 260.78,179.95" fill="none" stroke="#e34841" stroke-width="4.5"/><path d="M40.71,172.96 A104.4,104.4 0 1 1 239.29,172.96" fill="none" stroke="#f4f5f5" stroke-width="33.6"/><path d="M40.71,172.96 A104.4,104.4 0 0 1 39.56,169.20" fill="none" stroke="#5aa947" stroke-width="33.6"/></svg>
<span class="t" style="left:869.10px;top:570.48px;font-size:51.16px;color:#5aa947;transform:scaleX(0.9486);-webkit-text-stroke:0.60px #5aa947;">1.0%</span>
<svg style="position:absolute;left:1150px;top:442px;" width="280" height="200" viewBox="0 0 280 200"><path d="M19.22,179.95 A127.0,127.0 0 0 1 254.91,86.63" fill="none" stroke="#5aa947" stroke-width="4.5"/><path d="M254.91,86.63 A127.0,127.0 0 0 1 266.75,132.73" fill="none" stroke="#e2893d" stroke-width="4.5"/><path d="M266.75,132.73 A127.0,127.0 0 0 1 260.78,179.95" fill="none" stroke="#e34841" stroke-width="4.5"/><path d="M40.71,172.96 A104.4,104.4 0 1 1 239.29,172.96" fill="none" stroke="#f4f5f5" stroke-width="33.6"/><path d="M40.71,172.96 A104.4,104.4 0 0 1 106.74,41.74" fill="none" stroke="#5aa947" stroke-width="33.6"/></svg>
<span class="t" style="left:1232.11px;top:570.77px;font-size:39.24px;color:#5aa947;transform:scaleX(0.9864);-webkit-text-stroke:0.60px #5aa947;">41.4%</span>
<svg style="position:absolute;left:1511px;top:442px;" width="280" height="200" viewBox="0 0 280 200"><path d="M19.22,179.95 A127.0,127.0 0 0 1 13.25,132.73" fill="none" stroke="#5aa947" stroke-width="4.5"/><path d="M13.25,132.73 A127.0,127.0 0 0 1 37.25,66.05" fill="none" stroke="#e2893d" stroke-width="4.5"/><path d="M37.25,66.05 A127.0,127.0 0 0 1 260.78,179.95" fill="none" stroke="#e34841" stroke-width="4.5"/><path d="M40.71,172.96 A104.4,104.4 0 1 1 239.29,172.96" fill="none" stroke="#f4f5f5" stroke-width="33.6"/></svg>
<span class="t" style="left:1594.82px;top:566.91px;font-size:61.05px;color:#5aa947;transform:scaleX(1.0348);-webkit-text-stroke:0.60px #5aa947;">N/A</span>
<svg style="position:absolute;left:1873px;top:442px;" width="280" height="200" viewBox="0 0 280 200"><path d="M19.22,179.95 A127.0,127.0 0 0 1 254.91,86.63" fill="none" stroke="#5aa947" stroke-width="4.5"/><path d="M254.91,86.63 A127.0,127.0 0 0 1 266.75,132.73" fill="none" stroke="#e2893d" stroke-width="4.5"/><path d="M266.75,132.73 A127.0,127.0 0 0 1 260.78,179.95" fill="none" stroke="#e34841" stroke-width="4.5"/><path d="M40.71,172.96 A104.4,104.4 0 1 1 239.29,172.96" fill="none" stroke="#f4f5f5" stroke-width="33.6"/><path d="M40.71,172.96 A104.4,104.4 0 0 1 37.65,120.11" fill="none" stroke="#5aa947" stroke-width="33.6"/></svg>
<span class="t" style="left:1952.98px;top:572.68px;font-size:39.83px;color:#5aa947;transform:scaleX(0.9956);-webkit-text-stroke:0.60px #5aa947;">13.6%</span>
<span class="t" style="left:2305.70px;top:446.29px;font-size:30.96px;color:#24292e;transform:scaleX(0.9739);-webkit-text-stroke:0.68px #24292e;">1</span>
<span class="t" style="left:2497.10px;top:446.29px;font-size:30.96px;color:#24292e;transform:scaleX(1.0998);-webkit-text-stroke:0.68px #24292e;">967</span>
<span class="t" style="left:2559.91px;top:449.12px;font-size:27.62px;color:#24292e;transform:scaleX(1.0972);-webkit-text-stroke:0.61px #24292e;">MiB</span>
<span class="t" style="left:2774.15px;top:446.29px;font-size:30.96px;color:#24292e;transform:scaleX(1.1149);-webkit-text-stroke:0.68px #24292e;">0</span>
<span class="t" style="left:2799.91px;top:449.12px;font-size:27.62px;color:#24292e;transform:scaleX(1.0545);-webkit-text-stroke:0.61px #24292e;">B</span>
<span class="t" style="left:2269.60px;top:599.16px;font-size:30.52px;color:#24292e;transform:scaleX(1.0338);-webkit-text-stroke:0.67px #24292e;">19</span>
<span class="t" style="left:2311.41px;top:601.37px;font-size:27.91px;color:#24292e;transform:scaleX(0.9898);-webkit-text-stroke:0.61px #24292e;">GiB</span>
<span class="t" style="left:2617.50px;top:599.16px;font-size:30.52px;color:#24292e;transform:scaleX(0.9878);-webkit-text-stroke:0.67px #24292e;">1.2</span>
<span class="t" style="left:2667.25px;top:600.51px;font-size:28.92px;color:#24292e;transform:scaleX(1.0282);-webkit-text-stroke:0.64px #24292e;">days</span>
<div style="position:absolute;left:32px;top:742px;width:1430px;height:516px;box-sizing:border-box;background:#ffffff;border:2px solid #e3e4e5;border-radius:12px;"></div>
<div style="position:absolute;left:1478px;top:742px;width:1430px;height:516px;box-sizing:border-box;background:#ffffff;border:2px solid #e3e4e5;border-radius:12px;"></div>
<div style="position:absolute;left:32px;top:1274px;width:1430px;height:516px;box-sizing:border-box;background:#ffffff;border:2px solid #e3e4e5;border-radius:12px;"></div>
<div style="position:absolute;left:1478px;top:1274px;width:1430px;height:516px;box-sizing:border-box;background:#ffffff;border:2px solid #e3e4e5;border-radius:12px;"></div>
<span class="t" style="left:49.51px;top:761.16px;font-size:30.52px;color:#24292e;transform:scaleX(0.9641);-webkit-text-stroke:0.70px #24292e;">CPU Basic</span>
<svg style="position:absolute;left:224px;top:760px;" width="32" height="32" viewBox="0 0 32 32"><circle cx="16" cy="16" r="12.3" fill="none" stroke="#5a5e62" stroke-width="2.6"/><line x1="16" y1="15" x2="16" y2="21.5" stroke="#5a5e62" stroke-width="2.8" stroke-linecap="round"/><circle cx="16" cy="10.6" r="1.7" fill="#5a5e62"/></svg>
<span class="t" style="left:1494.46px;top:760.96px;font-size:30.52px;color:#24292e;transform:scaleX(1.0156);-webkit-text-stroke:0.70px #24292e;">Memory Basic</span>
<svg style="position:absolute;left:1721.5px;top:759.8px;" width="32" height="32" viewBox="0 0 32 32"><circle cx="16" cy="16" r="12.3" fill="none" stroke="#5a5e62" stroke-width="2.6"/><line x1="16" y1="15" x2="16" y2="21.5" stroke="#5a5e62" stroke-width="2.8" stroke-linecap="round"/><circle cx="16" cy="10.6" r="1.7" fill="#5a5e62"/></svg>
<span class="t" style="left:48.43px;top:1293.16px;font-size:30.52px;color:#24292e;transform:scaleX(1.0280);-webkit-text-stroke:0.70px #24292e;">Network Traffic Basic</span>
<svg style="position:absolute;left:376px;top:1292px;" width="32" height="32" viewBox="0 0 32 32"><circle cx="16" cy="16" r="12.3" fill="none" stroke="#5a5e62" stroke-width="2.6"/><line x1="16" y1="15" x2="16" y2="21.5" stroke="#5a5e62" stroke-width="2.8" stroke-linecap="round"/><circle cx="16" cy="10.6" r="1.7" fill="#5a5e62"/></svg>
<span class="t" style="left:1494.52px;top:1293.76px;font-size:30.52px;color:#24292e;transform:scaleX(0.9907);-webkit-text-stroke:0.70px #24292e;">Disk Space Used Basic</span>
<svg style="position:absolute;left:1842px;top:1292.6px;" width="32" height="32" viewBox="0 0 32 32"><circle cx="16" cy="16" r="12.3" fill="none" stroke="#5a5e62" stroke-width="2.6"/><line x1="16" y1="15" x2="16" y2="21.5" stroke="#5a5e62" stroke-width="2.8" stroke-linecap="round"/><circle cx="16" cy="10.6" r="1.7" fill="#5a5e62"/></svg>
<svg style="position:absolute;left:0;top:0" width="2932" height="1546"><line x1="131" y1="1136.0" x2="1428" y2="1136.0" stroke="rgba(36,41,46,0.11)" stroke-width="1.3"/><line x1="131" y1="1076.8" x2="1428" y2="1076.8" stroke="rgba(36,41,46,0.11)" stroke-width="1.3"/><line x1="131" y1="1017.6" x2="1428" y2="1017.6" stroke="rgba(36,41,46,0.11)" stroke-width="1.3"/><line x1="131" y1="958.4" x2="1428" y2="958.4" stroke="rgba(36,41,46,0.11)" stroke-width="1.3"/><line x1="131" y1="899.2" x2="1428" y2="899.2" stroke="rgba(36,41,46,0.11)" stroke-width="1.3"/><line x1="131" y1="840.0" x2="1428" y2="840.0" stroke="rgba(36,41,46,0.11)" stroke-width="1.3"/><line x1="182" y1="840" x2="182" y2="1144" stroke="rgba(36,41,46,0.11)" stroke-width="1.3"/><line x1="398" y1="840" x2="398" y2="1144" stroke="rgba(36,41,46,0.11)" stroke-width="1.3"/><line x1="615" y1="840" x2="615" y2="1144" stroke="rgba(36,41,46,0.11)" stroke-width="1.3"/><line x1="830" y1="840" x2="830" y2="1144" stroke="rgba(36,41,46,0.11)" stroke-width="1.3"/><line x1="1046" y1="840" x2="1046" y2="1144" stroke="rgba(36,41,46,0.11)" stroke-width="1.3"/><line x1="1262" y1="840" x2="1262" y2="1144" stroke="rgba(36,41,46,0.11)" stroke-width="1.3"/><polygon points="131,840 1424,840 1424.0,1123.3 1420.8,1123.9 1417.5,1124.7 1414.3,1125.4 1411.1,1123.3 1407.8,1119.4 1404.6,1115.5 1401.4,1114.2 1398.1,1117.8 1394.9,1121.4 1391.7,1124.8 1388.4,1124.4 1385.2,1124.0 1382.0,1123.7 1378.7,1121.8 1375.5,1119.5 1372.3,1117.3 1369.0,1115.1 1365.8,1115.4 1362.6,1115.7 1359.3,1115.9 1356.1,1117.9 1352.9,1120.4 1349.7,1122.9 1346.4,1122.9 1343.2,1120.1 1340.0,1117.3 1336.7,1115.2 1333.5,1115.4 1330.3,1115.7 1327.0,1116.0 1323.8,1115.6 1320.6,1115.1 1317.3,1114.6 1314.1,1114.4 1310.9,1115.4 1307.6,1116.4 1304.4,1117.4 1301.2,1116.9 1297.9,1116.1 1294.7,1115.4 1291.5,1115.3 1288.2,1115.5 1285.0,1115.8 1281.8,1116.8 1278.5,1119.1 1275.3,1121.4 1272.1,1123.5 1268.8,1121.4 1265.6,1119.4 1262.4,1117.4 1259.1,1115.8 1255.9,1115.3 1252.7,1114.7 1249.4,1114.3 1246.2,1117.5 1243.0,1120.8 1239.7,1124.0 1236.5,1124.6 1233.3,1124.5 1230.0,1124.3 1226.8,1123.0 1223.6,1120.5 1220.4,1118.0 1217.1,1116.5 1213.9,1118.8 1210.7,1121.1 1207.4,1123.4 1204.2,1123.9 1201.0,1124.3 1197.7,1124.7 1194.5,1123.3 1191.3,1121.0 1188.0,1118.7 1184.8,1118.2 1181.6,1121.0 1178.3,1123.8 1175.1,1126.2 1171.9,1125.6 1168.6,1125.0 1165.4,1124.3 1162.2,1121.4 1158.9,1118.0 1155.7,1114.6 1152.5,1113.0 1149.2,1113.0 1146.0,1113.0 1142.8,1113.0 1139.5,1115.7 1136.3,1119.1 1133.1,1122.5 1129.8,1122.7 1126.6,1119.7 1123.4,1116.8 1120.1,1114.5 1116.9,1114.5 1113.7,1114.5 1110.4,1114.5 1107.2,1113.8 1104.0,1113.1 1100.8,1112.3 1097.5,1113.3 1094.3,1115.2 1091.1,1117.0 1087.8,1117.5 1084.6,1115.9 1081.4,1114.4 1078.1,1113.1 1074.9,1114.0 1071.7,1114.9 1068.4,1115.9 1065.2,1118.1 1062.0,1120.6 1058.7,1123.1 1055.5,1123.1 1052.3,1121.3 1049.0,1119.4 1045.8,1117.6 1042.6,1116.9 1039.3,1116.6 1036.1,1116.2 1032.9,1117.4 1029.6,1120.1 1026.4,1122.8 1023.2,1124.7 1019.9,1124.3 1016.7,1124.0 1013.5,1123.6 1010.2,1120.9 1007.0,1118.1 1003.8,1115.3 1000.5,1116.2 997.3,1118.6 994.1,1121.0 990.8,1123.5 987.6,1123.8 984.4,1123.9 981.1,1124.1 977.9,1121.4 974.7,1117.3 971.5,1113.2 968.2,1115.5 965.0,1118.7 961.8,1121.9 958.5,1124.7 955.3,1123.6 952.1,1122.4 948.8,1121.3 945.6,1119.4 942.4,1117.2 939.1,1115.1 935.9,1114.0 932.7,1113.0 929.4,1111.9 926.2,1112.3 923.0,1116.5 919.7,1120.6 916.5,1124.8 913.3,1121.6 910.0,1118.3 906.8,1115.1 903.6,1114.3 900.3,1114.3 897.1,1114.4 893.9,1114.5 890.6,1116.7 887.4,1118.9 884.2,1121.1 880.9,1120.7 877.7,1119.1 874.5,1117.5 871.2,1116.3 868.0,1115.6 864.8,1114.8 861.5,1114.4 858.3,1115.6 855.1,1116.8 851.8,1118.0 848.6,1119.6 845.4,1121.2 842.1,1122.9 838.9,1122.2 835.7,1119.9 832.5,1117.6 829.2,1115.9 826.0,1115.7 822.8,1115.5 819.5,1115.2 816.3,1117.0 813.1,1120.5 809.8,1123.9 806.6,1122.6 803.4,1119.6 800.1,1116.7 796.9,1115.1 793.7,1115.1 790.4,1115.1 787.2,1115.1 784.0,1117.0 780.7,1119.6 777.5,1122.1 774.3,1123.7 771.0,1124.0 767.8,1124.4 764.6,1124.7 761.3,1122.6 758.1,1119.5 754.9,1116.4 751.6,1118.4 748.4,1121.1 745.2,1123.7 741.9,1124.6 738.7,1124.3 735.5,1123.9 732.2,1123.6 729.0,1121.4 725.8,1118.8 722.5,1116.2 719.3,1114.5 716.1,1113.3 712.9,1112.2 709.6,1112.5 706.4,1115.9 703.2,1119.3 699.9,1123.1 696.7,1123.3 693.5,1119.8 690.2,1116.2 687.0,1115.2 683.8,1115.6 680.5,1116.0 677.3,1116.4 674.1,1118.6 670.8,1120.9 667.6,1123.2 664.4,1121.6 661.1,1118.9 657.9,1116.1 654.7,1114.9 651.4,1114.9 648.2,1114.9 645.0,1114.9 641.7,1116.2 638.5,1117.6 635.3,1119.0 632.0,1120.4 628.8,1121.7 625.6,1123.1 622.3,1122.3 619.1,1119.5 615.9,1116.7 612.6,1114.9 609.4,1114.9 606.2,1114.9 602.9,1114.9 599.7,1117.0 596.5,1119.9 593.2,1122.9 590.0,1123.1 586.8,1120.6 583.5,1118.1 580.3,1116.4 577.1,1116.4 573.9,1116.4 570.6,1116.4 567.4,1118.0 564.2,1120.5 560.9,1123.0 557.7,1124.1 554.5,1123.4 551.2,1122.8 548.0,1121.5 544.8,1118.2 541.5,1115.0 538.3,1112.2 535.1,1116.4 531.8,1120.5 528.6,1124.7 525.4,1124.5 522.1,1123.7 518.9,1122.9 515.7,1122.0 512.4,1120.6 509.2,1119.2 506.0,1117.9 502.7,1116.3 499.5,1114.7 496.3,1113.0 493.0,1113.3 489.8,1117.0 486.6,1120.7 483.3,1123.2 480.1,1120.2 476.9,1117.3 473.6,1114.3 470.4,1113.3 467.2,1114.1 463.9,1115.0 460.7,1116.1 457.5,1118.1 454.2,1120.0 451.0,1121.4 447.8,1119.3 444.6,1117.2 441.3,1115.1 438.1,1114.0 434.9,1114.0 431.6,1114.0 428.4,1115.1 425.2,1118.6 421.9,1122.1 418.7,1125.2 415.5,1124.8 412.2,1124.4 409.0,1124.0 405.8,1123.0 402.5,1121.4 399.3,1119.7 396.1,1118.9 392.8,1120.8 389.6,1122.6 386.4,1124.5 383.1,1125.2 379.9,1125.2 376.7,1125.2 373.4,1123.9 370.2,1120.7 367.0,1117.5 363.7,1115.2 360.5,1116.4 357.3,1117.6 354.0,1118.8 350.8,1120.2 347.6,1121.8 344.3,1123.4 341.1,1123.4 337.9,1120.6 334.6,1117.8 331.4,1115.4 328.2,1114.5 324.9,1113.7 321.7,1112.9 318.5,1116.4 315.3,1120.0 312.0,1123.6 308.8,1121.8 305.6,1118.6 302.3,1115.4 299.1,1113.8 295.9,1113.5 292.6,1113.2 289.4,1112.9 286.2,1112.9 282.9,1112.9 279.7,1112.9 276.5,1113.3 273.2,1115.1 270.0,1116.9 266.8,1118.3 263.5,1116.8 260.3,1115.2 257.1,1113.6 253.8,1114.0 250.6,1114.7 247.4,1115.3 244.1,1117.3 240.9,1119.9 237.7,1122.5 234.4,1122.4 231.2,1119.6 228.0,1116.8 224.7,1114.9 221.5,1114.9 218.3,1114.9 215.0,1114.9 211.8,1116.8 208.6,1119.8 205.3,1122.8 202.1,1124.1 198.9,1123.5 195.7,1123.0 192.4,1122.4 189.2,1120.8 186.0,1119.0 182.7,1117.1 179.5,1117.8 176.3,1120.1 173.0,1122.4 169.8,1124.1 166.6,1124.8 163.3,1125.6 160.1,1125.5 156.9,1122.7 153.6,1120.0 150.4,1117.3 147.2,1119.8 143.9,1122.3 140.7,1124.8 137.5,1125.2 134.2,1125.2 131.0,1125.2" fill="#052b51" fill-opacity="0.38"/><polygon points="131.0,1125.2 134.2,1125.2 137.5,1125.2 140.7,1124.8 143.9,1122.3 147.2,1119.8 150.4,1117.3 153.6,1120.0 156.9,1122.7 160.1,1125.5 163.3,1125.6 166.6,1124.8 169.8,1124.1 173.0,1122.4 176.3,1120.1 179.5,1117.8 182.7,1117.1 186.0,1119.0 189.2,1120.8 192.4,1122.4 195.7,1123.0 198.9,1123.5 202.1,1124.1 205.3,1122.8 208.6,1119.8 211.8,1116.8 215.0,1114.9 218.3,1114.9 221.5,1114.9 224.7,1114.9 228.0,1116.8 231.2,1119.6 234.4,1122.4 237.7,1122.5 240.9,1119.9 244.1,1117.3 247.4,1115.3 250.6,1114.7 253.8,1114.0 257.1,1113.6 260.3,1115.2 263.5,1116.8 266.8,1118.3 270.0,1116.9 273.2,1115.1 276.5,1113.3 279.7,1112.9 282.9,1112.9 286.2,1112.9 289.4,1112.9 292.6,1113.2 295.9,1113.5 299.1,1113.8 302.3,1115.4 305.6,1118.6 308.8,1121.8 312.0,1123.6 315.3,1120.0 318.5,1116.4 321.7,1112.9 324.9,1113.7 328.2,1114.5 331.4,1115.4 334.6,1117.8 337.9,1120.6 341.1,1123.4 344.3,1123.4 347.6,1121.8 350.8,1120.2 354.0,1118.8 357.3,1117.6 360.5,1116.4 363.7,1115.2 367.0,1117.5 370.2,1120.7 373.4,1123.9 376.7,1125.2 379.9,1125.2 383.1,1125.2 386.4,1124.5 389.6,1122.6 392.8,1120.8 396.1,1118.9 399.3,1119.7 402.5,1121.4 405.8,1123.0 409.0,1124.0 412.2,1124.4 415.5,1124.8 418.7,1125.2 421.9,1122.1 425.2,1118.6 428.4,1115.1 431.6,1114.0 434.9,1114.0 438.1,1114.0 441.3,1115.1 444.6,1117.2 447.8,1119.3 451.0,1121.4 454.2,1120.0 457.5,1118.1 460.7,1116.1 463.9,1115.0 467.2,1114.1 470.4,1113.3 473.6,1114.3 476.9,1117.3 480.1,1120.2 483.3,1123.2 486.6,1120.7 489.8,1117.0 493.0,1113.3 496.3,1113.0 499.5,1114.7 502.7,1116.3 506.0,1117.9 509.2,1119.2 512.4,1120.6 515.7,1122.0 518.9,1122.9 522.1,1123.7 525.4,1124.5 528.6,1124.7 531.8,1120.5 535.1,1116.4 538.3,1112.2 541.5,1115.0 544.8,1118.2 548.0,1121.5 551.2,1122.8 554.5,1123.4 557.7,1124.1 560.9,1123.0 564.2,1120.5 567.4,1118.0 570.6,1116.4 573.9,1116.4 577.1,1116.4 580.3,1116.4 583.5,1118.1 586.8,1120.6 590.0,1123.1 593.2,1122.9 596.5,1119.9 599.7,1117.0 602.9,1114.9 606.2,1114.9 609.4,1114.9 612.6,1114.9 615.9,1116.7 619.1,1119.5 622.3,1122.3 625.6,1123.1 628.8,1121.7 632.0,1120.4 635.3,1119.0 638.5,1117.6 641.7,1116.2 645.0,1114.9 648.2,1114.9 651.4,1114.9 654.7,1114.9 657.9,1116.1 661.1,1118.9 664.4,1121.6 667.6,1123.2 670.8,1120.9 674.1,1118.6 677.3,1116.4 680.5,1116.0 683.8,1115.6 687.0,1115.2 690.2,1116.2 693.5,1119.8 696.7,1123.3 699.9,1123.1 703.2,1119.3 706.4,1115.9 709.6,1112.5 712.9,1112.2 716.1,1113.3 719.3,1114.5 722.5,1116.2 725.8,1118.8 729.0,1121.4 732.2,1123.6 735.5,1123.9 738.7,1124.3 741.9,1124.6 745.2,1123.7 748.4,1121.1 751.6,1118.4 754.9,1116.4 758.1,1119.5 761.3,1122.6 764.6,1124.7 767.8,1124.4 771.0,1124.0 774.3,1123.7 777.5,1122.1 780.7,1119.6 784.0,1117.0 787.2,1115.1 790.4,1115.1 793.7,1115.1 796.9,1115.1 800.1,1116.7 803.4,1119.6 806.6,1122.6 809.8,1123.9 813.1,1120.5 816.3,1117.0 819.5,1115.2 822.8,1115.5 826.0,1115.7 829.2,1115.9 832.5,1117.6 835.7,1119.9 838.9,1122.2 842.1,1122.9 845.4,1121.2 848.6,1119.6 851.8,1118.0 855.1,1116.8 858.3,1115.6 861.5,1114.4 864.8,1114.8 868.0,1115.6 871.2,1116.3 874.5,1117.5 877.7,1119.1 880.9,1120.7 884.2,1121.1 887.4,1118.9 890.6,1116.7 893.9,1114.5 897.1,1114.4 900.3,1114.3 903.6,1114.3 906.8,1115.1 910.0,1118.3 913.3,1121.6 916.5,1124.8 919.7,1120.6 923.0,1116.5 926.2,1112.3 929.4,1111.9 932.7,1113.0 935.9,1114.0 939.1,1115.1 942.4,1117.2 945.6,1119.4 948.8,1121.3 952.1,1122.4 955.3,1123.6 958.5,1124.7 961.8,1121.9 965.0,1118.7 968.2,1115.5 971.5,1113.2 974.7,1117.3 977.9,1121.4 981.1,1124.1 984.4,1123.9 987.6,1123.8 990.8,1123.5 994.1,1121.0 997.3,1118.6 1000.5,1116.2 1003.8,1115.3 1007.0,1118.1 1010.2,1120.9 1013.5,1123.6 1016.7,1124.0 1019.9,1124.3 1023.2,1124.7 1026.4,1122.8 1029.6,1120.1 1032.9,1117.4 1036.1,1116.2 1039.3,1116.6 1042.6,1116.9 1045.8,1117.6 1049.0,1119.4 1052.3,1121.3 1055.5,1123.1 1058.7,1123.1 1062.0,1120.6 1065.2,1118.1 1068.4,1115.9 1071.7,1114.9 1074.9,1114.0 1078.1,1113.1 1081.4,1114.4 1084.6,1115.9 1087.8,1117.5 1091.1,1117.0 1094.3,1115.2 1097.5,1113.3 1100.8,1112.3 1104.0,1113.1 1107.2,1113.8 1110.4,1114.5 1113.7,1114.5 1116.9,1114.5 1120.1,1114.5 1123.4,1116.8 1126.6,1119.7 1129.8,1122.7 1133.1,1122.5 1136.3,1119.1 1139.5,1115.7 1142.8,1113.0 1146.0,1113.0 1149.2,1113.0 1152.5,1113.0 1155.7,1114.6 1158.9,1118.0 1162.2,1121.4 1165.4,1124.3 1168.6,1125.0 1171.9,1125.6 1175.1,1126.2 1178.3,1123.8 1181.6,1121.0 1184.8,1118.2 1188.0,1118.7 1191.3,1121.0 1194.5,1123.3 1197.7,1124.7 1201.0,1124.3 1204.2,1123.9 1207.4,1123.4 1210.7,1121.1 1213.9,1118.8 1217.1,1116.5 1220.4,1118.0 1223.6,1120.5 1226.8,1123.0 1230.0,1124.3 1233.3,1124.5 1236.5,1124.6 1239.7,1124.0 1243.0,1120.8 1246.2,1117.5 1249.4,1114.3 1252.7,1114.7 1255.9,1115.3 1259.1,1115.8 1262.4,1117.4 1265.6,1119.4 1268.8,1121.4 1272.1,1123.5 1275.3,1121.4 1278.5,1119.1 1281.8,1116.8 1285.0,1115.8 1288.2,1115.5 1291.5,1115.3 1294.7,1115.4 1297.9,1116.1 1301.2,1116.9 1304.4,1117.4 1307.6,1116.4 1310.9,1115.4 1314.1,1114.4 1317.3,1114.6 1320.6,1115.1 1323.8,1115.6 1327.0,1116.0 1330.3,1115.7 1333.5,1115.4 1336.7,1115.2 1340.0,1117.3 1343.2,1120.1 1346.4,1122.9 1349.7,1122.9 1352.9,1120.4 1356.1,1117.9 1359.3,1115.9 1362.6,1115.7 1365.8,1115.4 1369.0,1115.1 1372.3,1117.3 1375.5,1119.5 1378.7,1121.8 1382.0,1123.7 1385.2,1124.0 1388.4,1124.4 1391.7,1124.8 1394.9,1121.4 1398.1,1117.8 1401.4,1114.2 1404.6,1115.5 1407.8,1119.4 1411.1,1123.3 1414.3,1125.4 1417.5,1124.7 1420.8,1123.9 1424.0,1123.3 1424.0,1127.2 1420.8,1127.5 1417.5,1127.7 1414.3,1128.0 1411.1,1126.6 1407.8,1124.2 1404.6,1121.8 1401.4,1120.9 1398.1,1122.7 1394.9,1124.6 1391.7,1126.3 1388.4,1126.6 1385.2,1126.9 1382.0,1127.2 1378.7,1125.9 1375.5,1124.3 1372.3,1122.7 1369.0,1121.2 1365.8,1121.4 1362.6,1121.7 1359.3,1122.0 1356.1,1123.5 1352.9,1125.3 1349.7,1127.2 1346.4,1127.0 1343.2,1124.6 1340.0,1122.2 1336.7,1120.4 1333.5,1121.1 1330.3,1121.9 1327.0,1122.6 1323.8,1122.5 1320.6,1122.4 1317.3,1122.2 1314.1,1122.1 1310.9,1122.1 1307.6,1122.1 1304.4,1122.1 1301.2,1121.8 1297.9,1121.5 1294.7,1121.3 1291.5,1121.4 1288.2,1121.9 1285.0,1122.4 1281.8,1123.1 1278.5,1124.5 1275.3,1125.9 1272.1,1127.1 1268.8,1125.9 1265.6,1124.7 1262.4,1123.5 1259.1,1122.6 1255.9,1122.4 1252.7,1122.2 1249.4,1122.1 1246.2,1124.0 1243.0,1125.8 1239.7,1127.7 1236.5,1127.9 1233.3,1127.6 1230.0,1127.4 1226.8,1126.3 1223.6,1124.5 1220.4,1122.6 1217.1,1121.5 1213.9,1123.4 1210.7,1125.2 1207.4,1127.1 1204.2,1127.2 1201.0,1127.2 1197.7,1127.2 1194.5,1126.2 1191.3,1124.6 1188.0,1123.1 1184.8,1122.7 1181.6,1124.6 1178.3,1126.4 1175.1,1128.1 1171.9,1127.8 1168.6,1127.5 1165.4,1127.3 1162.2,1125.7 1158.9,1123.9 1155.7,1122.0 1152.5,1121.2 1149.2,1121.2 1146.0,1121.2 1142.8,1121.2 1139.5,1122.8 1136.3,1124.9 1133.1,1127.1 1129.8,1127.3 1126.6,1125.6 1123.4,1124.0 1120.1,1122.6 1116.9,1122.1 1113.7,1121.6 1110.4,1121.2 1107.2,1121.2 1104.0,1121.2 1100.8,1121.2 1097.5,1121.5 1094.3,1121.9 1091.1,1122.4 1087.8,1122.2 1084.6,1121.1 1081.4,1120.0 1078.1,1119.1 1074.9,1120.1 1071.7,1121.0 1068.4,1121.9 1065.2,1123.6 1062.0,1125.5 1058.7,1127.3 1055.5,1127.1 1052.3,1125.2 1049.0,1123.4 1045.8,1121.5 1042.6,1121.4 1039.3,1121.7 1036.1,1121.9 1032.9,1122.9 1029.6,1124.5 1026.4,1126.0 1023.2,1127.2 1019.9,1127.2 1016.7,1127.2 1013.5,1127.2 1010.2,1125.4 1007.0,1123.6 1003.8,1121.7 1000.5,1122.3 997.3,1123.9 994.1,1125.5 990.8,1127.1 987.6,1127.2 984.4,1127.2 981.1,1127.2 977.9,1125.8 974.7,1123.6 971.5,1121.5 968.2,1122.8 965.0,1124.6 961.8,1126.5 958.5,1128.0 955.3,1127.3 952.1,1126.6 948.8,1125.8 945.6,1124.3 942.4,1122.7 939.1,1121.2 935.9,1121.2 932.7,1121.2 929.4,1121.2 926.2,1121.7 923.0,1123.9 919.7,1126.0 916.5,1128.1 913.3,1125.8 910.0,1123.5 906.8,1121.2 903.6,1120.6 900.3,1120.6 897.1,1120.6 893.9,1120.6 890.6,1122.5 887.4,1124.6 884.2,1126.6 880.9,1126.2 877.7,1124.9 874.5,1123.5 871.2,1122.5 868.0,1122.0 864.8,1121.6 861.5,1121.2 858.3,1121.5 855.1,1121.7 851.8,1122.0 848.6,1123.4 845.4,1125.0 842.1,1126.6 838.9,1126.1 835.7,1124.3 832.5,1122.4 829.2,1121.2 826.0,1121.2 822.8,1121.2 819.5,1121.2 816.3,1122.4 813.1,1124.5 809.8,1126.7 806.6,1125.6 803.4,1123.5 800.1,1121.4 796.9,1120.2 793.7,1120.2 790.4,1120.2 787.2,1120.2 784.0,1121.8 780.7,1123.9 777.5,1126.0 774.3,1127.2 771.0,1127.2 767.8,1127.2 764.6,1127.2 761.3,1125.5 758.1,1123.0 754.9,1120.5 751.6,1122.1 748.4,1124.3 745.2,1126.4 741.9,1127.2 738.7,1127.2 735.5,1127.2 732.2,1127.2 729.0,1125.1 725.8,1122.6 722.5,1120.1 719.3,1119.6 716.1,1120.5 712.9,1121.4 709.6,1122.7 706.4,1124.7 703.2,1126.7 699.9,1128.6 696.7,1125.8 693.5,1124.0 690.2,1122.1 687.0,1121.4 683.8,1121.4 680.5,1121.4 677.3,1121.4 674.1,1123.2 670.8,1125.0 667.6,1126.9 664.4,1125.4 661.1,1122.9 657.9,1120.4 654.7,1119.7 651.4,1120.2 648.2,1120.8 645.0,1121.4 641.7,1121.9 638.5,1122.5 635.3,1123.0 632.0,1124.1 628.8,1125.4 625.6,1126.7 622.3,1126.3 619.1,1124.5 615.9,1122.6 612.6,1121.4 609.4,1121.4 606.2,1121.4 602.9,1121.4 599.7,1122.7 596.5,1124.5 593.2,1126.4 590.0,1126.4 586.8,1124.5 583.5,1122.7 580.3,1121.4 577.1,1121.4 573.9,1121.4 570.6,1121.4 567.4,1122.6 564.2,1124.5 560.9,1126.3 557.7,1127.0 554.5,1126.4 551.2,1125.7 548.0,1124.9 544.8,1123.5 541.5,1122.1 538.3,1121.0 535.1,1123.3 531.8,1125.6 528.6,1127.9 525.4,1128.2 522.1,1128.2 518.9,1128.2 515.7,1127.8 512.4,1126.2 509.2,1124.6 506.0,1123.0 502.7,1121.8 499.5,1120.8 496.3,1119.9 493.0,1120.1 489.8,1122.3 486.6,1124.4 483.3,1125.8 480.1,1123.7 476.9,1121.6 473.6,1119.5 470.4,1118.8 467.2,1119.6 463.9,1120.3 460.7,1121.5 457.5,1123.5 454.2,1125.6 451.0,1127.1 447.8,1125.3 444.6,1123.5 441.3,1121.7 438.1,1120.8 434.9,1120.8 431.6,1120.8 428.4,1121.4 425.2,1123.4 421.9,1125.5 418.7,1127.3 415.5,1127.3 412.2,1127.3 409.0,1127.3 405.8,1126.6 402.5,1125.0 399.3,1123.5 396.1,1122.6 392.8,1124.0 389.6,1125.4 386.4,1126.8 383.1,1127.3 379.9,1127.3 376.7,1127.3 373.4,1126.6 370.2,1124.7 367.0,1122.9 363.7,1121.5 360.5,1121.7 357.3,1121.9 354.0,1122.2 350.8,1123.2 347.6,1124.7 344.3,1126.3 341.1,1126.6 337.9,1124.8 334.6,1122.9 331.4,1121.4 328.2,1121.2 324.9,1121.0 321.7,1120.8 318.5,1122.8 315.3,1124.8 312.0,1126.9 308.8,1125.7 305.6,1123.7 302.3,1121.7 299.1,1120.8 295.9,1120.8 292.6,1120.8 289.4,1120.8 286.2,1120.8 282.9,1120.8 279.7,1120.8 276.5,1121.1 273.2,1122.0 270.0,1122.9 266.8,1123.7 263.5,1122.8 260.3,1121.8 257.1,1120.9 253.8,1120.8 250.6,1120.8 247.4,1120.8 244.1,1122.6 240.9,1125.2 237.7,1127.8 234.4,1127.6 231.2,1124.5 228.0,1121.5 224.7,1119.7 221.5,1120.9 218.3,1122.1 215.0,1123.3 211.8,1124.5 208.6,1125.6 205.3,1126.7 202.1,1127.3 198.9,1127.3 195.7,1127.3 192.4,1127.3 189.2,1125.3 186.0,1122.8 182.7,1120.3 179.5,1121.0 176.3,1123.8 173.0,1126.6 169.8,1128.2 166.6,1128.2 163.3,1128.2 160.1,1127.8 156.9,1125.9 153.6,1124.1 150.4,1122.3 147.2,1124.2 143.9,1126.0 140.7,1127.9 137.5,1128.2 134.2,1128.2 131.0,1128.2" fill="#0a437c" fill-opacity="0.36"/><polygon points="131.0,1128.2 134.2,1128.2 137.5,1128.2 140.7,1127.9 143.9,1126.0 147.2,1124.2 150.4,1122.3 153.6,1124.1 156.9,1125.9 160.1,1127.8 163.3,1128.2 166.6,1128.2 169.8,1128.2 173.0,1126.6 176.3,1123.8 179.5,1121.0 182.7,1120.3 186.0,1122.8 189.2,1125.3 192.4,1127.3 195.7,1127.3 198.9,1127.3 202.1,1127.3 205.3,1126.7 208.6,1125.6 211.8,1124.5 215.0,1123.3 218.3,1122.1 221.5,1120.9 224.7,1119.7 228.0,1121.5 231.2,1124.5 234.4,1127.6 237.7,1127.8 240.9,1125.2 244.1,1122.6 247.4,1120.8 250.6,1120.8 253.8,1120.8 257.1,1120.9 260.3,1121.8 263.5,1122.8 266.8,1123.7 270.0,1122.9 273.2,1122.0 276.5,1121.1 279.7,1120.8 282.9,1120.8 286.2,1120.8 289.4,1120.8 292.6,1120.8 295.9,1120.8 299.1,1120.8 302.3,1121.7 305.6,1123.7 308.8,1125.7 312.0,1126.9 315.3,1124.8 318.5,1122.8 321.7,1120.8 324.9,1121.0 328.2,1121.2 331.4,1121.4 334.6,1122.9 337.9,1124.8 341.1,1126.6 344.3,1126.3 347.6,1124.7 350.8,1123.2 354.0,1122.2 357.3,1121.9 360.5,1121.7 363.7,1121.5 367.0,1122.9 370.2,1124.7 373.4,1126.6 376.7,1127.3 379.9,1127.3 383.1,1127.3 386.4,1126.8 389.6,1125.4 392.8,1124.0 396.1,1122.6 399.3,1123.5 402.5,1125.0 405.8,1126.6 409.0,1127.3 412.2,1127.3 415.5,1127.3 418.7,1127.3 421.9,1125.5 425.2,1123.4 428.4,1121.4 431.6,1120.8 434.9,1120.8 438.1,1120.8 441.3,1121.7 444.6,1123.5 447.8,1125.3 451.0,1127.1 454.2,1125.6 457.5,1123.5 460.7,1121.5 463.9,1120.3 467.2,1119.6 470.4,1118.8 473.6,1119.5 476.9,1121.6 480.1,1123.7 483.3,1125.8 486.6,1124.4 489.8,1122.3 493.0,1120.1 496.3,1119.9 499.5,1120.8 502.7,1121.8 506.0,1123.0 509.2,1124.6 512.4,1126.2 515.7,1127.8 518.9,1128.2 522.1,1128.2 525.4,1128.2 528.6,1127.9 531.8,1125.6 535.1,1123.3 538.3,1121.0 541.5,1122.1 544.8,1123.5 548.0,1124.9 551.2,1125.7 554.5,1126.4 557.7,1127.0 560.9,1126.3 564.2,1124.5 567.4,1122.6 570.6,1121.4 573.9,1121.4 577.1,1121.4 580.3,1121.4 583.5,1122.7 586.8,1124.5 590.0,1126.4 593.2,1126.4 596.5,1124.5 599.7,1122.7 602.9,1121.4 606.2,1121.4 609.4,1121.4 612.6,1121.4 615.9,1122.6 619.1,1124.5 622.3,1126.3 625.6,1126.7 628.8,1125.4 632.0,1124.1 635.3,1123.0 638.5,1122.5 641.7,1121.9 645.0,1121.4 648.2,1120.8 651.4,1120.2 654.7,1119.7 657.9,1120.4 661.1,1122.9 664.4,1125.4 667.6,1126.9 670.8,1125.0 674.1,1123.2 677.3,1121.4 680.5,1121.4 683.8,1121.4 687.0,1121.4 690.2,1122.1 693.5,1124.0 696.7,1125.8 699.9,1128.6 703.2,1126.7 706.4,1124.7 709.6,1122.7 712.9,1121.4 716.1,1120.5 719.3,1119.6 722.5,1120.1 725.8,1122.6 729.0,1125.1 732.2,1127.2 735.5,1127.2 738.7,1127.2 741.9,1127.2 745.2,1126.4 748.4,1124.3 751.6,1122.1 754.9,1120.5 758.1,1123.0 761.3,1125.5 764.6,1127.2 767.8,1127.2 771.0,1127.2 774.3,1127.2 777.5,1126.0 780.7,1123.9 784.0,1121.8 787.2,1120.2 790.4,1120.2 793.7,1120.2 796.9,1120.2 800.1,1121.4 803.4,1123.5 806.6,1125.6 809.8,1126.7 813.1,1124.5 816.3,1122.4 819.5,1121.2 822.8,1121.2 826.0,1121.2 829.2,1121.2 832.5,1122.4 835.7,1124.3 838.9,1126.1 842.1,1126.6 845.4,1125.0 848.6,1123.4 851.8,1122.0 855.1,1121.7 858.3,1121.5 861.5,1121.2 864.8,1121.6 868.0,1122.0 871.2,1122.5 874.5,1123.5 877.7,1124.9 880.9,1126.2 884.2,1126.6 887.4,1124.6 890.6,1122.5 893.9,1120.6 897.1,1120.6 900.3,1120.6 903.6,1120.6 906.8,1121.2 910.0,1123.5 913.3,1125.8 916.5,1128.1 919.7,1126.0 923.0,1123.9 926.2,1121.7 929.4,1121.2 932.7,1121.2 935.9,1121.2 939.1,1121.2 942.4,1122.7 945.6,1124.3 948.8,1125.8 952.1,1126.6 955.3,1127.3 958.5,1128.0 961.8,1126.5 965.0,1124.6 968.2,1122.8 971.5,1121.5 974.7,1123.6 977.9,1125.8 981.1,1127.2 984.4,1127.2 987.6,1127.2 990.8,1127.1 994.1,1125.5 997.3,1123.9 1000.5,1122.3 1003.8,1121.7 1007.0,1123.6 1010.2,1125.4 1013.5,1127.2 1016.7,1127.2 1019.9,1127.2 1023.2,1127.2 1026.4,1126.0 1029.6,1124.5 1032.9,1122.9 1036.1,1121.9 1039.3,1121.7 1042.6,1121.4 1045.8,1121.5 1049.0,1123.4 1052.3,1125.2 1055.5,1127.1 1058.7,1127.3 1062.0,1125.5 1065.2,1123.6 1068.4,1121.9 1071.7,1121.0 1074.9,1120.1 1078.1,1119.1 1081.4,1120.0 1084.6,1121.1 1087.8,1122.2 1091.1,1122.4 1094.3,1121.9 1097.5,1121.5 1100.8,1121.2 1104.0,1121.2 1107.2,1121.2 1110.4,1121.2 1113.7,1121.6 1116.9,1122.1 1120.1,1122.6 1123.4,1124.0 1126.6,1125.6 1129.8,1127.3 1133.1,1127.1 1136.3,1124.9 1139.5,1122.8 1142.8,1121.2 1146.0,1121.2 1149.2,1121.2 1152.5,1121.2 1155.7,1122.0 1158.9,1123.9 1162.2,1125.7 1165.4,1127.3 1168.6,1127.5 1171.9,1127.8 1175.1,1128.1 1178.3,1126.4 1181.6,1124.6 1184.8,1122.7 1188.0,1123.1 1191.3,1124.6 1194.5,1126.2 1197.7,1127.2 1201.0,1127.2 1204.2,1127.2 1207.4,1127.1 1210.7,1125.2 1213.9,1123.4 1217.1,1121.5 1220.4,1122.6 1223.6,1124.5 1226.8,1126.3 1230.0,1127.4 1233.3,1127.6 1236.5,1127.9 1239.7,1127.7 1243.0,1125.8 1246.2,1124.0 1249.4,1122.1 1252.7,1122.2 1255.9,1122.4 1259.1,1122.6 1262.4,1123.5 1265.6,1124.7 1268.8,1125.9 1272.1,1127.1 1275.3,1125.9 1278.5,1124.5 1281.8,1123.1 1285.0,1122.4 1288.2,1121.9 1291.5,1121.4 1294.7,1121.3 1297.9,1121.5 1301.2,1121.8 1304.4,1122.1 1307.6,1122.1 1310.9,1122.1 1314.1,1122.1 1317.3,1122.2 1320.6,1122.4 1323.8,1122.5 1327.0,1122.6 1330.3,1121.9 1333.5,1121.1 1336.7,1120.4 1340.0,1122.2 1343.2,1124.6 1346.4,1127.0 1349.7,1127.2 1352.9,1125.3 1356.1,1123.5 1359.3,1122.0 1362.6,1121.7 1365.8,1121.4 1369.0,1121.2 1372.3,1122.7 1375.5,1124.3 1378.7,1125.9 1382.0,1127.2 1385.2,1126.9 1388.4,1126.6 1391.7,1126.3 1394.9,1124.6 1398.1,1122.7 1401.4,1120.9 1404.6,1121.8 1407.8,1124.2 1411.1,1126.6 1414.3,1128.0 1417.5,1127.7 1420.8,1127.5 1424.0,1127.2 1424,1136 131,1136" fill="#eab839" fill-opacity="0.36"/><polyline points="131.0,1128.2 134.2,1128.2 137.5,1128.2 140.7,1127.9 143.9,1126.0 147.2,1124.2 150.4,1122.3 153.6,1124.1 156.9,1125.9 160.1,1127.8 163.3,1128.2 166.6,1128.2 169.8,1128.2 173.0,1126.6 176.3,1123.8 179.5,1121.0 182.7,1120.3 186.0,1122.8 189.2,1125.3 192.4,1127.3 195.7,1127.3 198.9,1127.3 202.1,1127.3 205.3,1126.7 208.6,1125.6 211.8,1124.5 215.0,1123.3 218.3,1122.1 221.5,1120.9 224.7,1119.7 228.0,1121.5 231.2,1124.5 234.4,1127.6 237.7,1127.8 240.9,1125.2 244.1,1122.6 247.4,1120.8 250.6,1120.8 253.8,1120.8 257.1,1120.9 260.3,1121.8 263.5,1122.8 266.8,1123.7 270.0,1122.9 273.2,1122.0 276.5,1121.1 279.7,1120.8 282.9,1120.8 286.2,1120.8 289.4,1120.8 292.6,1120.8 295.9,1120.8 299.1,1120.8 302.3,1121.7 305.6,1123.7 308.8,1125.7 312.0,1126.9 315.3,1124.8 318.5,1122.8 321.7,1120.8 324.9,1121.0 328.2,1121.2 331.4,1121.4 334.6,1122.9 337.9,1124.8 341.1,1126.6 344.3,1126.3 347.6,1124.7 350.8,1123.2 354.0,1122.2 357.3,1121.9 360.5,1121.7 363.7,1121.5 367.0,1122.9 370.2,1124.7 373.4,1126.6 376.7,1127.3 379.9,1127.3 383.1,1127.3 386.4,1126.8 389.6,1125.4 392.8,1124.0 396.1,1122.6 399.3,1123.5 402.5,1125.0 405.8,1126.6 409.0,1127.3 412.2,1127.3 415.5,1127.3 418.7,1127.3 421.9,1125.5 425.2,1123.4 428.4,1121.4 431.6,1120.8 434.9,1120.8 438.1,1120.8 441.3,1121.7 444.6,1123.5 447.8,1125.3 451.0,1127.1 454.2,1125.6 457.5,1123.5 460.7,1121.5 463.9,1120.3 467.2,1119.6 470.4,1118.8 473.6,1119.5 476.9,1121.6 480.1,1123.7 483.3,1125.8 486.6,1124.4 489.8,1122.3 493.0,1120.1 496.3,1119.9 499.5,1120.8 502.7,1121.8 506.0,1123.0 509.2,1124.6 512.4,1126.2 515.7,1127.8 518.9,1128.2 522.1,1128.2 525.4,1128.2 528.6,1127.9 531.8,1125.6 535.1,1123.3 538.3,1121.0 541.5,1122.1 544.8,1123.5 548.0,1124.9 551.2,1125.7 554.5,1126.4 557.7,1127.0 560.9,1126.3 564.2,1124.5 567.4,1122.6 570.6,1121.4 573.9,1121.4 577.1,1121.4 580.3,1121.4 583.5,1122.7 586.8,1124.5 590.0,1126.4 593.2,1126.4 596.5,1124.5 599.7,1122.7 602.9,1121.4 606.2,1121.4 609.4,1121.4 612.6,1121.4 615.9,1122.6 619.1,1124.5 622.3,1126.3 625.6,1126.7 628.8,1125.4 632.0,1124.1 635.3,1123.0 638.5,1122.5 641.7,1121.9 645.0,1121.4 648.2,1120.8 651.4,1120.2 654.7,1119.7 657.9,1120.4 661.1,1122.9 664.4,1125.4 667.6,1126.9 670.8,1125.0 674.1,1123.2 677.3,1121.4 680.5,1121.4 683.8,1121.4 687.0,1121.4 690.2,1122.1 693.5,1124.0 696.7,1125.8 699.9,1128.6 703.2,1126.7 706.4,1124.7 709.6,1122.7 712.9,1121.4 716.1,1120.5 719.3,1119.6 722.5,1120.1 725.8,1122.6 729.0,1125.1 732.2,1127.2 735.5,1127.2 738.7,1127.2 741.9,1127.2 745.2,1126.4 748.4,1124.3 751.6,1122.1 754.9,1120.5 758.1,1123.0 761.3,1125.5 764.6,1127.2 767.8,1127.2 771.0,1127.2 774.3,1127.2 777.5,1126.0 780.7,1123.9 784.0,1121.8 787.2,1120.2 790.4,1120.2 793.7,1120.2 796.9,1120.2 800.1,1121.4 803.4,1123.5 806.6,1125.6 809.8,1126.7 813.1,1124.5 816.3,1122.4 819.5,1121.2 822.8,1121.2 826.0,1121.2 829.2,1121.2 832.5,1122.4 835.7,1124.3 838.9,1126.1 842.1,1126.6 845.4,1125.0 848.6,1123.4 851.8,1122.0 855.1,1121.7 858.3,1121.5 861.5,1121.2 864.8,1121.6 868.0,1122.0 871.2,1122.5 874.5,1123.5 877.7,1124.9 880.9,1126.2 884.2,1126.6 887.4,1124.6 890.6,1122.5 893.9,1120.6 897.1,1120.6 900.3,1120.6 903.6,1120.6 906.8,1121.2 910.0,1123.5 913.3,1125.8 916.5,1128.1 919.7,1126.0 923.0,1123.9 926.2,1121.7 929.4,1121.2 932.7,1121.2 935.9,1121.2 939.1,1121.2 942.4,1122.7 945.6,1124.3 948.8,1125.8 952.1,1126.6 955.3,1127.3 958.5,1128.0 961.8,1126.5 965.0,1124.6 968.2,1122.8 971.5,1121.5 974.7,1123.6 977.9,1125.8 981.1,1127.2 984.4,1127.2 987.6,1127.2 990.8,1127.1 994.1,1125.5 997.3,1123.9 1000.5,1122.3 1003.8,1121.7 1007.0,1123.6 1010.2,1125.4 1013.5,1127.2 1016.7,1127.2 1019.9,1127.2 1023.2,1127.2 1026.4,1126.0 1029.6,1124.5 1032.9,1122.9 1036.1,1121.9 1039.3,1121.7 1042.6,1121.4 1045.8,1121.5 1049.0,1123.4 1052.3,1125.2 1055.5,1127.1 1058.7,1127.3 1062.0,1125.5 1065.2,1123.6 1068.4,1121.9 1071.7,1121.0 1074.9,1120.1 1078.1,1119.1 1081.4,1120.0 1084.6,1121.1 1087.8,1122.2 1091.1,1122.4 1094.3,1121.9 1097.5,1121.5 1100.8,1121.2 1104.0,1121.2 1107.2,1121.2 1110.4,1121.2 1113.7,1121.6 1116.9,1122.1 1120.1,1122.6 1123.4,1124.0 1126.6,1125.6 1129.8,1127.3 1133.1,1127.1 1136.3,1124.9 1139.5,1122.8 1142.8,1121.2 1146.0,1121.2 1149.2,1121.2 1152.5,1121.2 1155.7,1122.0 1158.9,1123.9 1162.2,1125.7 1165.4,1127.3 1168.6,1127.5 1171.9,1127.8 1175.1,1128.1 1178.3,1126.4 1181.6,1124.6 1184.8,1122.7 1188.0,1123.1 1191.3,1124.6 1194.5,1126.2 1197.7,1127.2 1201.0,1127.2 1204.2,1127.2 1207.4,1127.1 1210.7,1125.2 1213.9,1123.4 1217.1,1121.5 1220.4,1122.6 1223.6,1124.5 1226.8,1126.3 1230.0,1127.4 1233.3,1127.6 1236.5,1127.9 1239.7,1127.7 1243.0,1125.8 1246.2,1124.0 1249.4,1122.1 1252.7,1122.2 1255.9,1122.4 1259.1,1122.6 1262.4,1123.5 1265.6,1124.7 1268.8,1125.9 1272.1,1127.1 1275.3,1125.9 1278.5,1124.5 1281.8,1123.1 1285.0,1122.4 1288.2,1121.9 1291.5,1121.4 1294.7,1121.3 1297.9,1121.5 1301.2,1121.8 1304.4,1122.1 1307.6,1122.1 1310.9,1122.1 1314.1,1122.1 1317.3,1122.2 1320.6,1122.4 1323.8,1122.5 1327.0,1122.6 1330.3,1121.9 1333.5,1121.1 1336.7,1120.4 1340.0,1122.2 1343.2,1124.6 1346.4,1127.0 1349.7,1127.2 1352.9,1125.3 1356.1,1123.5 1359.3,1122.0 1362.6,1121.7 1365.8,1121.4 1369.0,1121.2 1372.3,1122.7 1375.5,1124.3 1378.7,1125.9 1382.0,1127.2 1385.2,1126.9 1388.4,1126.6 1391.7,1126.3 1394.9,1124.6 1398.1,1122.7 1401.4,1120.9 1404.6,1121.8 1407.8,1124.2 1411.1,1126.6 1414.3,1128.0 1417.5,1127.7 1420.8,1127.5 1424.0,1127.2" fill="none" stroke="#d8ab30" stroke-width="1.9"/><polyline points="131.0,1125.8 134.2,1125.8 137.5,1125.8 140.7,1125.4 143.9,1122.9 147.2,1120.4 150.4,1117.9 153.6,1120.6 156.9,1123.3 160.1,1126.1 163.3,1126.2 166.6,1125.4 169.8,1124.7 173.0,1123.0 176.3,1120.7 179.5,1118.4 182.7,1117.7 186.0,1119.6 189.2,1121.4 192.4,1123.0 195.7,1123.6 198.9,1124.1 202.1,1124.7 205.3,1123.4 208.6,1120.4 211.8,1117.4 215.0,1115.5 218.3,1115.5 221.5,1115.5 224.7,1115.5 228.0,1117.4 231.2,1120.2 234.4,1123.0 237.7,1123.1 240.9,1120.5 244.1,1117.9 247.4,1115.9 250.6,1115.3 253.8,1114.6 257.1,1114.2 260.3,1115.8 263.5,1117.4 266.8,1118.9 270.0,1117.5 273.2,1115.7 276.5,1113.9 279.7,1113.5 282.9,1113.5 286.2,1113.5 289.4,1113.5 292.6,1113.8 295.9,1114.1 299.1,1114.4 302.3,1116.0 305.6,1119.2 308.8,1122.4 312.0,1124.2 315.3,1120.6 318.5,1117.0 321.7,1113.5 324.9,1114.3 328.2,1115.1 331.4,1116.0 334.6,1118.4 337.9,1121.2 341.1,1124.0 344.3,1124.0 347.6,1122.4 350.8,1120.8 354.0,1119.4 357.3,1118.2 360.5,1117.0 363.7,1115.8 367.0,1118.1 370.2,1121.3 373.4,1124.5 376.7,1125.8 379.9,1125.8 383.1,1125.8 386.4,1125.1 389.6,1123.2 392.8,1121.4 396.1,1119.5 399.3,1120.3 402.5,1122.0 405.8,1123.6 409.0,1124.6 412.2,1125.0 415.5,1125.4 418.7,1125.8 421.9,1122.7 425.2,1119.2 428.4,1115.7 431.6,1114.6 434.9,1114.6 438.1,1114.6 441.3,1115.7 444.6,1117.8 447.8,1119.9 451.0,1122.0 454.2,1120.6 457.5,1118.7 460.7,1116.7 463.9,1115.6 467.2,1114.7 470.4,1113.9 473.6,1114.9 476.9,1117.9 480.1,1120.8 483.3,1123.8 486.6,1121.3 489.8,1117.6 493.0,1113.9 496.3,1113.6 499.5,1115.3 502.7,1116.9 506.0,1118.5 509.2,1119.8 512.4,1121.2 515.7,1122.6 518.9,1123.5 522.1,1124.3 525.4,1125.1 528.6,1125.3 531.8,1121.1 535.1,1117.0 538.3,1112.8 541.5,1115.6 544.8,1118.8 548.0,1122.1 551.2,1123.4 554.5,1124.0 557.7,1124.7 560.9,1123.6 564.2,1121.1 567.4,1118.6 570.6,1117.0 573.9,1117.0 577.1,1117.0 580.3,1117.0 583.5,1118.7 586.8,1121.2 590.0,1123.7 593.2,1123.5 596.5,1120.5 599.7,1117.6 602.9,1115.5 606.2,1115.5 609.4,1115.5 612.6,1115.5 615.9,1117.3 619.1,1120.1 622.3,1122.9 625.6,1123.7 628.8,1122.3 632.0,1121.0 635.3,1119.6 638.5,1118.2 641.7,1116.8 645.0,1115.5 648.2,1115.5 651.4,1115.5 654.7,1115.5 657.9,1116.7 661.1,1119.5 664.4,1122.2 667.6,1123.8 670.8,1121.5 674.1,1119.2 677.3,1117.0 680.5,1116.6 683.8,1116.2 687.0,1115.8 690.2,1116.8 693.5,1120.4 696.7,1123.9 699.9,1123.7 703.2,1119.9 706.4,1116.5 709.6,1113.1 712.9,1112.8 716.1,1113.9 719.3,1115.1 722.5,1116.8 725.8,1119.4 729.0,1122.0 732.2,1124.2 735.5,1124.5 738.7,1124.9 741.9,1125.2 745.2,1124.3 748.4,1121.7 751.6,1119.0 754.9,1117.0 758.1,1120.1 761.3,1123.2 764.6,1125.3 767.8,1125.0 771.0,1124.6 774.3,1124.3 777.5,1122.7 780.7,1120.2 784.0,1117.6 787.2,1115.7 790.4,1115.7 793.7,1115.7 796.9,1115.7 800.1,1117.3 803.4,1120.2 806.6,1123.2 809.8,1124.5 813.1,1121.1 816.3,1117.6 819.5,1115.8 822.8,1116.1 826.0,1116.3 829.2,1116.5 832.5,1118.2 835.7,1120.5 838.9,1122.8 842.1,1123.5 845.4,1121.8 848.6,1120.2 851.8,1118.6 855.1,1117.4 858.3,1116.2 861.5,1115.0 864.8,1115.4 868.0,1116.2 871.2,1116.9 874.5,1118.1 877.7,1119.7 880.9,1121.3 884.2,1121.7 887.4,1119.5 890.6,1117.3 893.9,1115.1 897.1,1115.0 900.3,1114.9 903.6,1114.9 906.8,1115.7 910.0,1118.9 913.3,1122.2 916.5,1125.4 919.7,1121.2 923.0,1117.1 926.2,1112.9 929.4,1112.5 932.7,1113.6 935.9,1114.6 939.1,1115.7 942.4,1117.8 945.6,1120.0 948.8,1121.9 952.1,1123.0 955.3,1124.2 958.5,1125.3 961.8,1122.5 965.0,1119.3 968.2,1116.1 971.5,1113.8 974.7,1117.9 977.9,1122.0 981.1,1124.7 984.4,1124.5 987.6,1124.4 990.8,1124.1 994.1,1121.6 997.3,1119.2 1000.5,1116.8 1003.8,1115.9 1007.0,1118.7 1010.2,1121.5 1013.5,1124.2 1016.7,1124.6 1019.9,1124.9 1023.2,1125.3 1026.4,1123.4 1029.6,1120.7 1032.9,1118.0 1036.1,1116.8 1039.3,1117.2 1042.6,1117.5 1045.8,1118.2 1049.0,1120.0 1052.3,1121.9 1055.5,1123.7 1058.7,1123.7 1062.0,1121.2 1065.2,1118.7 1068.4,1116.5 1071.7,1115.5 1074.9,1114.6 1078.1,1113.7 1081.4,1115.0 1084.6,1116.5 1087.8,1118.1 1091.1,1117.6 1094.3,1115.8 1097.5,1113.9 1100.8,1112.9 1104.0,1113.7 1107.2,1114.4 1110.4,1115.1 1113.7,1115.1 1116.9,1115.1 1120.1,1115.1 1123.4,1117.4 1126.6,1120.3 1129.8,1123.3 1133.1,1123.1 1136.3,1119.7 1139.5,1116.3 1142.8,1113.6 1146.0,1113.6 1149.2,1113.6 1152.5,1113.6 1155.7,1115.2 1158.9,1118.6 1162.2,1122.0 1165.4,1124.9 1168.6,1125.6 1171.9,1126.2 1175.1,1126.8 1178.3,1124.4 1181.6,1121.6 1184.8,1118.8 1188.0,1119.3 1191.3,1121.6 1194.5,1123.9 1197.7,1125.3 1201.0,1124.9 1204.2,1124.5 1207.4,1124.0 1210.7,1121.7 1213.9,1119.4 1217.1,1117.1 1220.4,1118.6 1223.6,1121.1 1226.8,1123.6 1230.0,1124.9 1233.3,1125.1 1236.5,1125.2 1239.7,1124.6 1243.0,1121.4 1246.2,1118.1 1249.4,1114.9 1252.7,1115.3 1255.9,1115.9 1259.1,1116.4 1262.4,1118.0 1265.6,1120.0 1268.8,1122.0 1272.1,1124.1 1275.3,1122.0 1278.5,1119.7 1281.8,1117.4 1285.0,1116.4 1288.2,1116.1 1291.5,1115.9 1294.7,1116.0 1297.9,1116.7 1301.2,1117.5 1304.4,1118.0 1307.6,1117.0 1310.9,1116.0 1314.1,1115.0 1317.3,1115.2 1320.6,1115.7 1323.8,1116.2 1327.0,1116.6 1330.3,1116.3 1333.5,1116.0 1336.7,1115.8 1340.0,1117.9 1343.2,1120.7 1346.4,1123.5 1349.7,1123.5 1352.9,1121.0 1356.1,1118.5 1359.3,1116.5 1362.6,1116.3 1365.8,1116.0 1369.0,1115.7 1372.3,1117.9 1375.5,1120.1 1378.7,1122.4 1382.0,1124.3 1385.2,1124.6 1388.4,1125.0 1391.7,1125.4 1394.9,1122.0 1398.1,1118.4 1401.4,1114.8 1404.6,1116.1 1407.8,1120.0 1411.1,1123.9 1414.3,1126.0 1417.5,1125.3 1420.8,1124.5 1424.0,1123.9" fill="none" stroke="#0a437c" stroke-width="2"/><polyline points="131.0,1125.2 134.2,1125.2 137.5,1125.2 140.7,1124.8 143.9,1122.3 147.2,1119.8 150.4,1117.3 153.6,1120.0 156.9,1122.7 160.1,1125.5 163.3,1125.6 166.6,1124.8 169.8,1124.1 173.0,1122.4 176.3,1120.1 179.5,1117.8 182.7,1117.1 186.0,1119.0 189.2,1120.8 192.4,1122.4 195.7,1123.0 198.9,1123.5 202.1,1124.1 205.3,1122.8 208.6,1119.8 211.8,1116.8 215.0,1114.9 218.3,1114.9 221.5,1114.9 224.7,1114.9 228.0,1116.8 231.2,1119.6 234.4,1122.4 237.7,1122.5 240.9,1119.9 244.1,1117.3 247.4,1115.3 250.6,1114.7 253.8,1114.0 257.1,1113.6 260.3,1115.2 263.5,1116.8 266.8,1118.3 270.0,1116.9 273.2,1115.1 276.5,1113.3 279.7,1112.9 282.9,1112.9 286.2,1112.9 289.4,1112.9 292.6,1113.2 295.9,1113.5 299.1,1113.8 302.3,1115.4 305.6,1118.6 308.8,1121.8 312.0,1123.6 315.3,1120.0 318.5,1116.4 321.7,1112.9 324.9,1113.7 328.2,1114.5 331.4,1115.4 334.6,1117.8 337.9,1120.6 341.1,1123.4 344.3,1123.4 347.6,1121.8 350.8,1120.2 354.0,1118.8 357.3,1117.6 360.5,1116.4 363.7,1115.2 367.0,1117.5 370.2,1120.7 373.4,1123.9 376.7,1125.2 379.9,1125.2 383.1,1125.2 386.4,1124.5 389.6,1122.6 392.8,1120.8 396.1,1118.9 399.3,1119.7 402.5,1121.4 405.8,1123.0 409.0,1124.0 412.2,1124.4 415.5,1124.8 418.7,1125.2 421.9,1122.1 425.2,1118.6 428.4,1115.1 431.6,1114.0 434.9,1114.0 438.1,1114.0 441.3,1115.1 444.6,1117.2 447.8,1119.3 451.0,1121.4 454.2,1120.0 457.5,1118.1 460.7,1116.1 463.9,1115.0 467.2,1114.1 470.4,1113.3 473.6,1114.3 476.9,1117.3 480.1,1120.2 483.3,1123.2 486.6,1120.7 489.8,1117.0 493.0,1113.3 496.3,1113.0 499.5,1114.7 502.7,1116.3 506.0,1117.9 509.2,1119.2 512.4,1120.6 515.7,1122.0 518.9,1122.9 522.1,1123.7 525.4,1124.5 528.6,1124.7 531.8,1120.5 535.1,1116.4 538.3,1112.2 541.5,1115.0 544.8,1118.2 548.0,1121.5 551.2,1122.8 554.5,1123.4 557.7,1124.1 560.9,1123.0 564.2,1120.5 567.4,1118.0 570.6,1116.4 573.9,1116.4 577.1,1116.4 580.3,1116.4 583.5,1118.1 586.8,1120.6 590.0,1123.1 593.2,1122.9 596.5,1119.9 599.7,1117.0 602.9,1114.9 606.2,1114.9 609.4,1114.9 612.6,1114.9 615.9,1116.7 619.1,1119.5 622.3,1122.3 625.6,1123.1 628.8,1121.7 632.0,1120.4 635.3,1119.0 638.5,1117.6 641.7,1116.2 645.0,1114.9 648.2,1114.9 651.4,1114.9 654.7,1114.9 657.9,1116.1 661.1,1118.9 664.4,1121.6 667.6,1123.2 670.8,1120.9 674.1,1118.6 677.3,1116.4 680.5,1116.0 683.8,1115.6 687.0,1115.2 690.2,1116.2 693.5,1119.8 696.7,1123.3 699.9,1123.1 703.2,1119.3 706.4,1115.9 709.6,1112.5 712.9,1112.2 716.1,1113.3 719.3,1114.5 722.5,1116.2 725.8,1118.8 729.0,1121.4 732.2,1123.6 735.5,1123.9 738.7,1124.3 741.9,1124.6 745.2,1123.7 748.4,1121.1 751.6,1118.4 754.9,1116.4 758.1,1119.5 761.3,1122.6 764.6,1124.7 767.8,1124.4 771.0,1124.0 774.3,1123.7 777.5,1122.1 780.7,1119.6 784.0,1117.0 787.2,1115.1 790.4,1115.1 793.7,1115.1 796.9,1115.1 800.1,1116.7 803.4,1119.6 806.6,1122.6 809.8,1123.9 813.1,1120.5 816.3,1117.0 819.5,1115.2 822.8,1115.5 826.0,1115.7 829.2,1115.9 832.5,1117.6 835.7,1119.9 838.9,1122.2 842.1,1122.9 845.4,1121.2 848.6,1119.6 851.8,1118.0 855.1,1116.8 858.3,1115.6 861.5,1114.4 864.8,1114.8 868.0,1115.6 871.2,1116.3 874.5,1117.5 877.7,1119.1 880.9,1120.7 884.2,1121.1 887.4,1118.9 890.6,1116.7 893.9,1114.5 897.1,1114.4 900.3,1114.3 903.6,1114.3 906.8,1115.1 910.0,1118.3 913.3,1121.6 916.5,1124.8 919.7,1120.6 923.0,1116.5 926.2,1112.3 929.4,1111.9 932.7,1113.0 935.9,1114.0 939.1,1115.1 942.4,1117.2 945.6,1119.4 948.8,1121.3 952.1,1122.4 955.3,1123.6 958.5,1124.7 961.8,1121.9 965.0,1118.7 968.2,1115.5 971.5,1113.2 974.7,1117.3 977.9,1121.4 981.1,1124.1 984.4,1123.9 987.6,1123.8 990.8,1123.5 994.1,1121.0 997.3,1118.6 1000.5,1116.2 1003.8,1115.3 1007.0,1118.1 1010.2,1120.9 1013.5,1123.6 1016.7,1124.0 1019.9,1124.3 1023.2,1124.7 1026.4,1122.8 1029.6,1120.1 1032.9,1117.4 1036.1,1116.2 1039.3,1116.6 1042.6,1116.9 1045.8,1117.6 1049.0,1119.4 1052.3,1121.3 1055.5,1123.1 1058.7,1123.1 1062.0,1120.6 1065.2,1118.1 1068.4,1115.9 1071.7,1114.9 1074.9,1114.0 1078.1,1113.1 1081.4,1114.4 1084.6,1115.9 1087.8,1117.5 1091.1,1117.0 1094.3,1115.2 1097.5,1113.3 1100.8,1112.3 1104.0,1113.1 1107.2,1113.8 1110.4,1114.5 1113.7,1114.5 1116.9,1114.5 1120.1,1114.5 1123.4,1116.8 1126.6,1119.7 1129.8,1122.7 1133.1,1122.5 1136.3,1119.1 1139.5,1115.7 1142.8,1113.0 1146.0,1113.0 1149.2,1113.0 1152.5,1113.0 1155.7,1114.6 1158.9,1118.0 1162.2,1121.4 1165.4,1124.3 1168.6,1125.0 1171.9,1125.6 1175.1,1126.2 1178.3,1123.8 1181.6,1121.0 1184.8,1118.2 1188.0,1118.7 1191.3,1121.0 1194.5,1123.3 1197.7,1124.7 1201.0,1124.3 1204.2,1123.9 1207.4,1123.4 1210.7,1121.1 1213.9,1118.8 1217.1,1116.5 1220.4,1118.0 1223.6,1120.5 1226.8,1123.0 1230.0,1124.3 1233.3,1124.5 1236.5,1124.6 1239.7,1124.0 1243.0,1120.8 1246.2,1117.5 1249.4,1114.3 1252.7,1114.7 1255.9,1115.3 1259.1,1115.8 1262.4,1117.4 1265.6,1119.4 1268.8,1121.4 1272.1,1123.5 1275.3,1121.4 1278.5,1119.1 1281.8,1116.8 1285.0,1115.8 1288.2,1115.5 1291.5,1115.3 1294.7,1115.4 1297.9,1116.1 1301.2,1116.9 1304.4,1117.4 1307.6,1116.4 1310.9,1115.4 1314.1,1114.4 1317.3,1114.6 1320.6,1115.1 1323.8,1115.6 1327.0,1116.0 1330.3,1115.7 1333.5,1115.4 1336.7,1115.2 1340.0,1117.3 1343.2,1120.1 1346.4,1122.9 1349.7,1122.9 1352.9,1120.4 1356.1,1117.9 1359.3,1115.9 1362.6,1115.7 1365.8,1115.4 1369.0,1115.1 1372.3,1117.3 1375.5,1119.5 1378.7,1121.8 1382.0,1123.7 1385.2,1124.0 1388.4,1124.4 1391.7,1124.8 1394.9,1121.4 1398.1,1117.8 1401.4,1114.2 1404.6,1115.5 1407.8,1119.4 1411.1,1123.3 1414.3,1125.4 1417.5,1124.7 1420.8,1123.9 1424.0,1123.3" fill="none" stroke="#55205e" stroke-width="2.6"/><line x1="131" y1="840" x2="1424" y2="840" stroke="#052b51" stroke-width="2.4"/></svg>
<span class="t" style="left:83.09px;top:1123.87px;font-size:24.13px;color:#24292e;transform:scaleX(1.0704);-webkit-text-stroke:0.30px #24292e;">0%</span>
<span class="t" style="left:67.98px;top:1064.67px;font-size:24.13px;color:#24292e;transform:scaleX(1.0861);-webkit-text-stroke:0.30px #24292e;">20%</span>
<span class="t" style="left:67.90px;top:1005.47px;font-size:24.13px;color:#24292e;transform:scaleX(1.0879);-webkit-text-stroke:0.30px #24292e;">40%</span>
<span class="t" style="left:67.15px;top:946.27px;font-size:24.13px;color:#24292e;transform:scaleX(1.1037);-webkit-text-stroke:0.30px #24292e;">60%</span>
<span class="t" style="left:67.35px;top:887.07px;font-size:24.13px;color:#24292e;transform:scaleX(1.0995);-webkit-text-stroke:0.30px #24292e;">80%</span>
<span class="t" style="left:56.19px;top:827.87px;font-size:24.13px;color:#24292e;transform:scaleX(1.0404);-webkit-text-stroke:0.30px #24292e;">100%</span>
<span class="t" style="left:151.40px;top:1155.87px;font-size:24.13px;color:#24292e;-webkit-text-stroke:0.30px #24292e;">14:55</span>
<span class="t" style="left:367.36px;top:1155.87px;font-size:24.13px;color:#24292e;-webkit-text-stroke:0.30px #24292e;">15:00</span>
<span class="t" style="left:584.40px;top:1155.87px;font-size:24.13px;color:#24292e;-webkit-text-stroke:0.30px #24292e;">15:05</span>
<span class="t" style="left:799.36px;top:1155.87px;font-size:24.13px;color:#24292e;-webkit-text-stroke:0.30px #24292e;">15:10</span>
<span class="t" style="left:1015.40px;top:1155.87px;font-size:24.13px;color:#24292e;-webkit-text-stroke:0.30px #24292e;">15:15</span>
<span class="t" style="left:1231.36px;top:1155.87px;font-size:24.13px;color:#24292e;-webkit-text-stroke:0.30px #24292e;">15:20</span>
<div style="position:absolute;left:58px;top:1210px;width:28px;height:8px;box-sizing:border-box;background:#eab839;border-radius:4px;"></div>
<span class="t" style="left:100.87px;top:1201.08px;font-size:24.71px;color:#24292e;transform:scaleX(1.0532);-webkit-text-stroke:0.30px #24292e;">Busy System</span>
<div style="position:absolute;left:272px;top:1210px;width:28px;height:8px;box-sizing:border-box;background:#0a437c;border-radius:4px;"></div>
<span class="t" style="left:313.87px;top:1201.08px;font-size:24.71px;color:#24292e;transform:scaleX(1.0490);-webkit-text-stroke:0.30px #24292e;">Busy User</span>
<div style="position:absolute;left:455px;top:1210px;width:28px;height:8px;box-sizing:border-box;background:#890f02;border-radius:4px;"></div>
<span class="t" style="left:496.86px;top:1201.08px;font-size:24.71px;color:#24292e;transform:scaleX(1.0553);-webkit-text-stroke:0.30px #24292e;">Busy Iowait</span>
<div style="position:absolute;left:651px;top:1210px;width:28px;height:8px;box-sizing:border-box;background:#ef843c;border-radius:4px;"></div>
<span class="t" style="left:693.96px;top:1201.08px;font-size:24.71px;color:#24292e;transform:scaleX(1.0073);-webkit-text-stroke:0.30px #24292e;">Busy IRQs</span>
<div style="position:absolute;left:833px;top:1210px;width:28px;height:8px;box-sizing:border-box;background:#6d1f62;border-radius:4px;"></div>
<span class="t" style="left:875.89px;top:1201.08px;font-size:24.71px;color:#24292e;transform:scaleX(1.0399);-webkit-text-stroke:0.30px #24292e;">Busy Other</span>
<div style="position:absolute;left:1026px;top:1210px;width:28px;height:8px;box-sizing:border-box;background:#052b51;border-radius:4px;"></div>
<span class="t" style="left:1068.56px;top:1201.08px;font-size:24.71px;color:#24292e;transform:scaleX(1.0696);-webkit-text-stroke:0.30px #24292e;">Idle</span>
<svg style="position:absolute;left:0;top:0" width="2932" height="1546"><line x1="1609" y1="1136.0" x2="2874" y2="1136.0" stroke="rgba(36,41,46,0.11)" stroke-width="1.3"/><line x1="1609" y1="1102.9" x2="2874" y2="1102.9" stroke="rgba(36,41,46,0.11)" stroke-width="1.3"/><line x1="1609" y1="1069.8" x2="2874" y2="1069.8" stroke="rgba(36,41,46,0.11)" stroke-width="1.3"/><line x1="1609" y1="1036.6" x2="2874" y2="1036.6" stroke="rgba(36,41,46,0.11)" stroke-width="1.3"/><line x1="1609" y1="1003.5" x2="2874" y2="1003.5" stroke="rgba(36,41,46,0.11)" stroke-width="1.3"/><line x1="1609" y1="970.4" x2="2874" y2="970.4" stroke="rgba(36,41,46,0.11)" stroke-width="1.3"/><line x1="1609" y1="937.2" x2="2874" y2="937.2" stroke="rgba(36,41,46,0.11)" stroke-width="1.3"/><line x1="1609" y1="904.1" x2="2874" y2="904.1" stroke="rgba(36,41,46,0.11)" stroke-width="1.3"/><line x1="1609" y1="871.0" x2="2874" y2="871.0" stroke="rgba(36,41,46,0.11)" stroke-width="1.3"/><line x1="1659" y1="840" x2="1659" y2="1144" stroke="rgba(36,41,46,0.11)" stroke-width="1.3"/><line x1="1870" y1="840" x2="1870" y2="1144" stroke="rgba(36,41,46,0.11)" stroke-width="1.3"/><line x1="2080" y1="840" x2="2080" y2="1144" stroke="rgba(36,41,46,0.11)" stroke-width="1.3"/><line x1="2291" y1="840" x2="2291" y2="1144" stroke="rgba(36,41,46,0.11)" stroke-width="1.3"/><line x1="2502" y1="840" x2="2502" y2="1144" stroke="rgba(36,41,46,0.11)" stroke-width="1.3"/><line x1="2713" y1="840" x2="2713" y2="1144" stroke="rgba(36,41,46,0.11)" stroke-width="1.3"/><polygon points="1609,886 2870,886 2870.0,931.9 2859.5,932.0 2849.0,932.8 2838.5,934.3 2828.0,934.4 2817.5,934.5 2806.9,934.2 2796.4,934.5 2785.9,934.4 2775.4,934.2 2764.9,934.2 2754.4,934.4 2743.9,934.4 2733.4,934.2 2722.9,934.2 2712.4,934.4 2701.9,934.3 2691.4,934.3 2680.8,934.5 2670.3,934.3 2659.8,934.1 2649.3,934.0 2638.8,933.8 2628.3,933.7 2617.8,933.5 2607.3,933.6 2596.8,933.9 2586.3,934.0 2575.8,934.3 2565.3,934.2 2554.8,934.2 2544.2,934.5 2533.7,934.2 2523.2,934.3 2512.7,934.4 2502.2,936.2 2491.7,934.6 2481.2,934.4 2470.7,934.2 2460.2,934.4 2449.7,934.5 2439.2,934.2 2428.7,934.2 2418.1,934.3 2407.6,934.2 2397.1,934.4 2386.6,934.2 2376.1,934.4 2365.6,934.2 2355.1,934.3 2344.6,934.3 2334.1,934.2 2323.6,934.4 2313.1,934.1 2302.6,934.2 2292.0,934.2 2281.5,934.2 2271.0,934.4 2260.5,934.5 2250.0,934.2 2239.5,934.2 2229.0,934.2 2218.5,934.9 2208.0,935.6 2197.5,936.2 2187.0,935.9 2176.4,935.3 2165.9,934.4 2155.4,934.4 2144.9,934.2 2134.4,934.1 2123.9,934.4 2113.4,934.5 2102.9,934.3 2092.4,934.4 2081.9,934.3 2071.4,934.4 2060.9,934.1 2050.3,934.2 2039.8,934.2 2029.3,934.4 2018.8,934.8 2008.3,935.1 1997.8,935.2 1987.3,935.0 1976.8,934.6 1966.3,934.4 1955.8,934.4 1945.3,934.3 1934.8,934.3 1924.2,934.3 1913.7,934.3 1903.2,933.9 1892.7,933.7 1882.2,933.4 1871.7,933.6 1861.2,933.8 1850.7,933.9 1840.2,934.3 1829.7,934.1 1819.2,934.2 1808.7,934.3 1798.2,934.4 1787.6,934.5 1777.1,934.5 1766.6,934.1 1756.1,934.4 1745.6,934.4 1735.1,934.2 1724.6,934.4 1714.1,934.8 1703.6,935.3 1693.1,934.9 1682.6,934.4 1672.0,934.2 1661.5,934.3 1651.0,934.3 1640.5,934.3 1630.0,934.4 1619.5,934.3 1609.0,934.3" fill="#c6dbbd" fill-opacity="0.8"/><polygon points="1609.0,934.3 1619.5,934.3 1630.0,934.4 1640.5,934.3 1651.0,934.3 1661.5,934.3 1672.0,934.2 1682.6,934.4 1693.1,934.9 1703.6,935.3 1714.1,934.8 1724.6,934.4 1735.1,934.2 1745.6,934.4 1756.1,934.4 1766.6,934.1 1777.1,934.5 1787.6,934.5 1798.2,934.4 1808.7,934.3 1819.2,934.2 1829.7,934.1 1840.2,934.3 1850.7,933.9 1861.2,933.8 1871.7,933.6 1882.2,933.4 1892.7,933.7 1903.2,933.9 1913.7,934.3 1924.2,934.3 1934.8,934.3 1945.3,934.3 1955.8,934.4 1966.3,934.4 1976.8,934.6 1987.3,935.0 1997.8,935.2 2008.3,935.1 2018.8,934.8 2029.3,934.4 2039.8,934.2 2050.3,934.2 2060.9,934.1 2071.4,934.4 2081.9,934.3 2092.4,934.4 2102.9,934.3 2113.4,934.5 2123.9,934.4 2134.4,934.1 2144.9,934.2 2155.4,934.4 2165.9,934.4 2176.4,935.3 2187.0,935.9 2197.5,936.2 2208.0,935.6 2218.5,934.9 2229.0,934.2 2239.5,934.2 2250.0,934.2 2260.5,934.5 2271.0,934.4 2281.5,934.2 2292.0,934.2 2302.6,934.2 2313.1,934.1 2323.6,934.4 2334.1,934.2 2344.6,934.3 2355.1,934.3 2365.6,934.2 2376.1,934.4 2386.6,934.2 2397.1,934.4 2407.6,934.2 2418.1,934.3 2428.7,934.2 2439.2,934.2 2449.7,934.5 2460.2,934.4 2470.7,934.2 2481.2,934.4 2491.7,934.6 2502.2,936.2 2512.7,934.4 2523.2,934.3 2533.7,934.2 2544.2,934.5 2554.8,934.2 2565.3,934.2 2575.8,934.3 2586.3,934.0 2596.8,933.9 2607.3,933.6 2617.8,933.5 2628.3,933.7 2638.8,933.8 2649.3,934.0 2659.8,934.1 2670.3,934.3 2680.8,934.5 2691.4,934.3 2701.9,934.3 2712.4,934.4 2722.9,934.2 2733.4,934.2 2743.9,934.4 2754.4,934.4 2764.9,934.2 2775.4,934.2 2785.9,934.4 2796.4,934.5 2806.9,934.2 2817.5,934.5 2828.0,934.4 2838.5,934.3 2849.0,932.8 2859.5,932.0 2870.0,931.9 2870.0,1066.3 2859.5,1066.3 2849.0,1067.1 2838.5,1068.6 2828.0,1068.7 2817.5,1068.7 2806.9,1068.5 2796.4,1068.7 2785.9,1068.7 2775.4,1068.5 2764.9,1068.5 2754.4,1068.7 2743.9,1068.7 2733.4,1068.5 2722.9,1068.5 2712.4,1068.7 2701.9,1068.6 2691.4,1068.6 2680.8,1068.7 2670.3,1068.6 2659.8,1068.4 2649.3,1068.3 2638.8,1068.1 2628.3,1068.0 2617.8,1067.8 2607.3,1068.0 2596.8,1068.2 2586.3,1068.3 2575.8,1068.6 2565.3,1068.5 2554.8,1068.5 2544.2,1068.7 2533.7,1068.5 2523.2,1068.6 2512.7,1068.7 2502.2,1070.5 2491.7,1069.0 2481.2,1068.7 2470.7,1068.6 2460.2,1068.7 2449.7,1068.7 2439.2,1068.5 2428.7,1068.5 2418.1,1068.6 2407.6,1068.5 2397.1,1068.6 2386.6,1068.5 2376.1,1068.7 2365.6,1068.5 2355.1,1068.6 2344.6,1068.6 2334.1,1068.5 2323.6,1068.7 2313.1,1068.5 2302.6,1068.5 2292.0,1068.5 2281.5,1068.5 2271.0,1068.7 2260.5,1068.7 2250.0,1068.6 2239.5,1068.5 2229.0,1068.5 2218.5,1069.1 2208.0,1069.9 2197.5,1070.5 2187.0,1070.2 2176.4,1069.6 2165.9,1068.7 2155.4,1068.7 2144.9,1068.5 2134.4,1068.5 2123.9,1068.7 2113.4,1068.7 2102.9,1068.6 2092.4,1068.7 2081.9,1068.6 2071.4,1068.7 2060.9,1068.5 2050.3,1068.5 2039.8,1068.5 2029.3,1068.8 2018.8,1069.1 2008.3,1069.3 1997.8,1069.5 1987.3,1069.3 1976.8,1068.9 1966.3,1068.7 1955.8,1068.6 1945.3,1068.6 1934.8,1068.6 1924.2,1068.6 1913.7,1068.6 1903.2,1068.2 1892.7,1068.0 1882.2,1067.7 1871.7,1067.9 1861.2,1068.1 1850.7,1068.3 1840.2,1068.6 1829.7,1068.5 1819.2,1068.5 1808.7,1068.6 1798.2,1068.6 1787.6,1068.7 1777.1,1068.7 1766.6,1068.5 1756.1,1068.6 1745.6,1068.7 1735.1,1068.5 1724.6,1068.8 1714.1,1069.1 1703.6,1069.6 1693.1,1069.2 1682.6,1068.7 1672.0,1068.5 1661.5,1068.6 1651.0,1068.6 1640.5,1068.6 1630.0,1068.7 1619.5,1068.6 1609.0,1068.6" fill="#6f7d93" fill-opacity="0.66"/><polygon points="1609.0,1068.6 1619.5,1068.6 1630.0,1068.7 1640.5,1068.6 1651.0,1068.6 1661.5,1068.6 1672.0,1068.5 1682.6,1068.7 1693.1,1069.2 1703.6,1069.6 1714.1,1069.1 1724.6,1068.8 1735.1,1068.5 1745.6,1068.7 1756.1,1068.6 1766.6,1068.5 1777.1,1068.7 1787.6,1068.7 1798.2,1068.6 1808.7,1068.6 1819.2,1068.5 1829.7,1068.5 1840.2,1068.6 1850.7,1068.3 1861.2,1068.1 1871.7,1067.9 1882.2,1067.7 1892.7,1068.0 1903.2,1068.2 1913.7,1068.6 1924.2,1068.6 1934.8,1068.6 1945.3,1068.6 1955.8,1068.6 1966.3,1068.7 1976.8,1068.9 1987.3,1069.3 1997.8,1069.5 2008.3,1069.3 2018.8,1069.1 2029.3,1068.8 2039.8,1068.5 2050.3,1068.5 2060.9,1068.5 2071.4,1068.7 2081.9,1068.6 2092.4,1068.7 2102.9,1068.6 2113.4,1068.7 2123.9,1068.7 2134.4,1068.5 2144.9,1068.5 2155.4,1068.7 2165.9,1068.7 2176.4,1069.6 2187.0,1070.2 2197.5,1070.5 2208.0,1069.9 2218.5,1069.1 2229.0,1068.5 2239.5,1068.5 2250.0,1068.6 2260.5,1068.7 2271.0,1068.7 2281.5,1068.5 2292.0,1068.5 2302.6,1068.5 2313.1,1068.5 2323.6,1068.7 2334.1,1068.5 2344.6,1068.6 2355.1,1068.6 2365.6,1068.5 2376.1,1068.7 2386.6,1068.5 2397.1,1068.6 2407.6,1068.5 2418.1,1068.6 2428.7,1068.5 2439.2,1068.5 2449.7,1068.7 2460.2,1068.7 2470.7,1068.6 2481.2,1068.7 2491.7,1069.0 2502.2,1070.5 2512.7,1068.7 2523.2,1068.6 2533.7,1068.5 2544.2,1068.7 2554.8,1068.5 2565.3,1068.5 2575.8,1068.6 2586.3,1068.3 2596.8,1068.2 2607.3,1068.0 2617.8,1067.8 2628.3,1068.0 2638.8,1068.1 2649.3,1068.3 2659.8,1068.4 2670.3,1068.6 2680.8,1068.7 2691.4,1068.6 2701.9,1068.6 2712.4,1068.7 2722.9,1068.5 2733.4,1068.5 2743.9,1068.7 2754.4,1068.7 2764.9,1068.5 2775.4,1068.5 2785.9,1068.7 2796.4,1068.7 2806.9,1068.5 2817.5,1068.7 2828.0,1068.7 2838.5,1068.6 2849.0,1067.1 2859.5,1066.3 2870.0,1066.3 2870,1136 1609,1136" fill="#e9cf7f" fill-opacity="0.6"/><polyline points="1609.0,1068.6 1619.5,1068.6 1630.0,1068.7 1640.5,1068.6 1651.0,1068.6 1661.5,1068.6 1672.0,1068.5 1682.6,1068.7 1693.1,1069.2 1703.6,1069.6 1714.1,1069.1 1724.6,1068.8 1735.1,1068.5 1745.6,1068.7 1756.1,1068.6 1766.6,1068.5 1777.1,1068.7 1787.6,1068.7 1798.2,1068.6 1808.7,1068.6 1819.2,1068.5 1829.7,1068.5 1840.2,1068.6 1850.7,1068.3 1861.2,1068.1 1871.7,1067.9 1882.2,1067.7 1892.7,1068.0 1903.2,1068.2 1913.7,1068.6 1924.2,1068.6 1934.8,1068.6 1945.3,1068.6 1955.8,1068.6 1966.3,1068.7 1976.8,1068.9 1987.3,1069.3 1997.8,1069.5 2008.3,1069.3 2018.8,1069.1 2029.3,1068.8 2039.8,1068.5 2050.3,1068.5 2060.9,1068.5 2071.4,1068.7 2081.9,1068.6 2092.4,1068.7 2102.9,1068.6 2113.4,1068.7 2123.9,1068.7 2134.4,1068.5 2144.9,1068.5 2155.4,1068.7 2165.9,1068.7 2176.4,1069.6 2187.0,1070.2 2197.5,1070.5 2208.0,1069.9 2218.5,1069.1 2229.0,1068.5 2239.5,1068.5 2250.0,1068.6 2260.5,1068.7 2271.0,1068.7 2281.5,1068.5 2292.0,1068.5 2302.6,1068.5 2313.1,1068.5 2323.6,1068.7 2334.1,1068.5 2344.6,1068.6 2355.1,1068.6 2365.6,1068.5 2376.1,1068.7 2386.6,1068.5 2397.1,1068.6 2407.6,1068.5 2418.1,1068.6 2428.7,1068.5 2439.2,1068.5 2449.7,1068.7 2460.2,1068.7 2470.7,1068.6 2481.2,1068.7 2491.7,1069.0 2502.2,1070.5 2512.7,1068.7 2523.2,1068.6 2533.7,1068.5 2544.2,1068.7 2554.8,1068.5 2565.3,1068.5 2575.8,1068.6 2586.3,1068.3 2596.8,1068.2 2607.3,1068.0 2617.8,1067.8 2628.3,1068.0 2638.8,1068.1 2649.3,1068.3 2659.8,1068.4 2670.3,1068.6 2680.8,1068.7 2691.4,1068.6 2701.9,1068.6 2712.4,1068.7 2722.9,1068.5 2733.4,1068.5 2743.9,1068.7 2754.4,1068.7 2764.9,1068.5 2775.4,1068.5 2785.9,1068.7 2796.4,1068.7 2806.9,1068.5 2817.5,1068.7 2828.0,1068.7 2838.5,1068.6 2849.0,1067.1 2859.5,1066.3 2870.0,1066.3" fill="none" stroke="#d6ae2f" stroke-width="2.2"/><polyline points="1609.0,934.3 1619.5,934.3 1630.0,934.4 1640.5,934.3 1651.0,934.3 1661.5,934.3 1672.0,934.2 1682.6,934.4 1693.1,934.9 1703.6,935.3 1714.1,934.8 1724.6,934.4 1735.1,934.2 1745.6,934.4 1756.1,934.4 1766.6,934.1 1777.1,934.5 1787.6,934.5 1798.2,934.4 1808.7,934.3 1819.2,934.2 1829.7,934.1 1840.2,934.3 1850.7,933.9 1861.2,933.8 1871.7,933.6 1882.2,933.4 1892.7,933.7 1903.2,933.9 1913.7,934.3 1924.2,934.3 1934.8,934.3 1945.3,934.3 1955.8,934.4 1966.3,934.4 1976.8,934.6 1987.3,935.0 1997.8,935.2 2008.3,935.1 2018.8,934.8 2029.3,934.4 2039.8,934.2 2050.3,934.2 2060.9,934.1 2071.4,934.4 2081.9,934.3 2092.4,934.4 2102.9,934.3 2113.4,934.5 2123.9,934.4 2134.4,934.1 2144.9,934.2 2155.4,934.4 2165.9,934.4 2176.4,935.3 2187.0,935.9 2197.5,936.2 2208.0,935.6 2218.5,934.9 2229.0,934.2 2239.5,934.2 2250.0,934.2 2260.5,934.5 2271.0,934.4 2281.5,934.2 2292.0,934.2 2302.6,934.2 2313.1,934.1 2323.6,934.4 2334.1,934.2 2344.6,934.3 2355.1,934.3 2365.6,934.2 2376.1,934.4 2386.6,934.2 2397.1,934.4 2407.6,934.2 2418.1,934.3 2428.7,934.2 2439.2,934.2 2449.7,934.5 2460.2,934.4 2470.7,934.2 2481.2,934.4 2491.7,934.6 2502.2,936.2 2512.7,934.4 2523.2,934.3 2533.7,934.2 2544.2,934.5 2554.8,934.2 2565.3,934.2 2575.8,934.3 2586.3,934.0 2596.8,933.9 2607.3,933.6 2617.8,933.5 2628.3,933.7 2638.8,933.8 2649.3,934.0 2659.8,934.1 2670.3,934.3 2680.8,934.5 2691.4,934.3 2701.9,934.3 2712.4,934.4 2722.9,934.2 2733.4,934.2 2743.9,934.4 2754.4,934.4 2764.9,934.2 2775.4,934.2 2785.9,934.4 2796.4,934.5 2806.9,934.2 2817.5,934.5 2828.0,934.4 2838.5,934.3 2849.0,932.8 2859.5,932.0 2870.0,931.9" fill="none" stroke="#0e2f52" stroke-width="2.4"/><line x1="1609" y1="886" x2="2870" y2="886" stroke="#b3210f" stroke-width="2"/></svg>
<span class="t" style="left:1561.59px;top:1123.87px;font-size:24.13px;color:#24292e;transform:scaleX(1.0706);-webkit-text-stroke:0.30px #24292e;">0 B</span>
<span class="t" style="left:1508.49px;top:1090.75px;font-size:24.13px;color:#24292e;transform:scaleX(1.0374);-webkit-text-stroke:0.30px #24292e;">128 MiB</span>
<span class="t" style="left:1505.20px;top:1057.62px;font-size:24.13px;color:#24292e;transform:scaleX(1.0752);-webkit-text-stroke:0.30px #24292e;">256 MiB</span>
<span class="t" style="left:1504.61px;top:1024.50px;font-size:24.13px;color:#24292e;transform:scaleX(1.0820);-webkit-text-stroke:0.30px #24292e;">384 MiB</span>
<span class="t" style="left:1505.97px;top:991.37px;font-size:24.13px;color:#24292e;transform:scaleX(1.0664);-webkit-text-stroke:0.30px #24292e;">512 MiB</span>
<span class="t" style="left:1504.17px;top:958.25px;font-size:24.13px;color:#24292e;transform:scaleX(1.0870);-webkit-text-stroke:0.30px #24292e;">640 MiB</span>
<span class="t" style="left:1506.49px;top:925.12px;font-size:24.13px;color:#24292e;transform:scaleX(1.0604);-webkit-text-stroke:0.30px #24292e;">768 MiB</span>
<span class="t" style="left:1504.97px;top:892.00px;font-size:24.13px;color:#24292e;transform:scaleX(1.0778);-webkit-text-stroke:0.30px #24292e;">896 MiB</span>
<span class="t" style="left:1542.54px;top:858.87px;font-size:24.13px;color:#24292e;transform:scaleX(0.9557);-webkit-text-stroke:0.30px #24292e;">1 GiB</span>
<span class="t" style="left:1628.40px;top:1156.17px;font-size:24.13px;color:#24292e;-webkit-text-stroke:0.30px #24292e;">14:55</span>
<span class="t" style="left:1839.36px;top:1156.17px;font-size:24.13px;color:#24292e;-webkit-text-stroke:0.30px #24292e;">15:00</span>
<span class="t" style="left:2049.40px;top:1156.17px;font-size:24.13px;color:#24292e;-webkit-text-stroke:0.30px #24292e;">15:05</span>
<span class="t" style="left:2260.36px;top:1156.17px;font-size:24.13px;color:#24292e;-webkit-text-stroke:0.30px #24292e;">15:10</span>
<span class="t" style="left:2471.40px;top:1156.17px;font-size:24.13px;color:#24292e;-webkit-text-stroke:0.30px #24292e;">15:15</span>
<span class="t" style="left:2682.36px;top:1156.17px;font-size:24.13px;color:#24292e;-webkit-text-stroke:0.30px #24292e;">15:20</span>
<div style="position:absolute;left:1505px;top:1210px;width:28px;height:8px;box-sizing:border-box;background:#e0f9d7;border-radius:4px;"></div>
<span class="t" style="left:1548.44px;top:1201.08px;font-size:24.71px;color:#24292e;transform:scaleX(1.0052);-webkit-text-stroke:0.30px #24292e;">Total</span>
<div style="position:absolute;left:1625px;top:1210px;width:28px;height:8px;box-sizing:border-box;background:#dcb43a;border-radius:4px;"></div>
<span class="t" style="left:1667.99px;top:1201.08px;font-size:24.71px;color:#24292e;transform:scaleX(1.0519);-webkit-text-stroke:0.30px #24292e;">Used</span>
<div style="position:absolute;left:1750px;top:1210px;width:28px;height:8px;box-sizing:border-box;background:#0e2f52;border-radius:4px;"></div>
<span class="t" style="left:1791.68px;top:1201.08px;font-size:24.71px;color:#24292e;transform:scaleX(1.0559);-webkit-text-stroke:0.30px #24292e;">Cache + Buffer</span>
<div style="position:absolute;left:1988px;top:1210px;width:28px;height:8px;box-sizing:border-box;background:#86ad72;border-radius:4px;"></div>
<span class="t" style="left:2029.92px;top:1201.08px;font-size:24.71px;color:#24292e;transform:scaleX(1.0276);-webkit-text-stroke:0.30px #24292e;">Free</span>
<div style="position:absolute;left:2103px;top:1210px;width:28px;height:8px;box-sizing:border-box;background:#b9301c;border-radius:4px;"></div>
<span class="t" style="left:2145.83px;top:1201.08px;font-size:24.71px;color:#24292e;transform:scaleX(1.0456);-webkit-text-stroke:0.30px #24292e;">Swap used</span>
<svg style="position:absolute;left:0;top:0" width="2932" height="1546"><rect x="165" y="1443" width="1259" height="103" fill="#afc5a6"/><line x1="165" y1="1545.6" x2="1428" y2="1545.6" stroke="rgba(36,41,46,0.11)" stroke-width="1.3"/><line x1="165" y1="1494.3" x2="1428" y2="1494.3" stroke="rgba(36,41,46,0.11)" stroke-width="1.3"/><line x1="165" y1="1443.0" x2="1428" y2="1443.0" stroke="rgba(36,41,46,0.11)" stroke-width="1.3"/><line x1="165" y1="1391.7" x2="1428" y2="1391.7" stroke="rgba(36,41,46,0.11)" stroke-width="1.3"/><line x1="215" y1="1372" x2="215" y2="1546" stroke="rgba(36,41,46,0.11)" stroke-width="1.3"/><line x1="425.5" y1="1372" x2="425.5" y2="1546" stroke="rgba(36,41,46,0.11)" stroke-width="1.3"/><line x1="635" y1="1372" x2="635" y2="1546" stroke="rgba(36,41,46,0.11)" stroke-width="1.3"/><line x1="846" y1="1372" x2="846" y2="1546" stroke="rgba(36,41,46,0.11)" stroke-width="1.3"/><line x1="1056" y1="1372" x2="1056" y2="1546" stroke="rgba(36,41,46,0.11)" stroke-width="1.3"/><line x1="1266" y1="1372" x2="1266" y2="1546" stroke="rgba(36,41,46,0.11)" stroke-width="1.3"/><polygon points="165.2,1443 165.2,1410.5 172.6,1413.4 182.9,1409.6 193.3,1424.7 203.6,1424.7 215.4,1430.0 225.7,1426.7 236.1,1428.8 247.9,1430.0 258.2,1430.8 268.5,1430.8 278.8,1430.0 287.7,1430.0 299.5,1434.1 309.8,1430.0 320.2,1427.3 330.5,1426.1 340.8,1429.4 352.6,1424.7 362.9,1426.7 373.3,1428.2 383.6,1432.9 393.9,1430.0 404.2,1430.0 414.6,1430.0 424.9,1432.9 435.2,1430.0 457.4,1430.0 467.7,1414.9 478.0,1412.0 498.7,1409.9 509.0,1430.0 519.3,1426.7 531.1,1428.2 541.5,1430.0 551.8,1434.1 562.1,1430.0 572.4,1430.0 582.8,1429.1 593.1,1432.9 603.4,1430.0 624.1,1430.0 634.4,1427.0 644.7,1425.8 656.5,1423.8 666.9,1423.8 687.5,1425.8 697.8,1424.7 700.0,1424.8 709.1,1424.8 719.7,1429.9 730.3,1427.8 740.9,1428.7 751.5,1428.7 762.1,1433.9 772.7,1429.9 783.3,1412.7 792.4,1411.8 804.5,1413.6 813.5,1409.0 824.1,1423.6 834.7,1424.8 845.3,1424.8 855.9,1426.9 866.5,1426.9 877.1,1427.8 887.7,1428.7 898.3,1428.7 908.9,1396.9 919.5,1394.5 930.1,1396.9 940.7,1393.0 951.3,1421.8 961.9,1421.8 972.5,1426.0 983.1,1421.8 993.7,1419.6 1004.3,1406.0 1014.9,1401.2 1025.5,1400.0 1036.1,1415.7 1046.7,1420.5 1057.3,1424.8 1067.9,1424.8 1077.0,1421.8 1087.6,1422.7 1098.2,1426.0 1108.8,1423.9 1130.0,1423.9 1140.6,1427.2 1151.2,1422.7 1161.8,1426.0 1172.4,1427.2 1183.0,1429.9 1193.6,1424.8 1204.1,1422.7 1214.7,1423.9 1223.8,1412.1 1234.4,1411.2 1245.0,1411.2 1257.1,1412.7 1266.2,1426.9 1276.8,1428.7 1287.4,1428.7 1298.0,1429.9 1308.6,1433.0 1319.2,1428.7 1329.8,1428.7 1340.4,1428.7 1351.0,1433.9 1361.6,1429.9 1381.3,1429.9 1393.4,1433.9 1402.5,1429.9 1413.1,1429.9 1423.7,1424.8 1423.7,1443" fill="#efe1ad"/><polyline points="165.2,1410.5 172.6,1413.4 182.9,1409.6 193.3,1424.7 203.6,1424.7 215.4,1430.0 225.7,1426.7 236.1,1428.8 247.9,1430.0 258.2,1430.8 268.5,1430.8 278.8,1430.0 287.7,1430.0 299.5,1434.1 309.8,1430.0 320.2,1427.3 330.5,1426.1 340.8,1429.4 352.6,1424.7 362.9,1426.7 373.3,1428.2 383.6,1432.9 393.9,1430.0 404.2,1430.0 414.6,1430.0 424.9,1432.9 435.2,1430.0 457.4,1430.0 467.7,1414.9 478.0,1412.0 498.7,1409.9 509.0,1430.0 519.3,1426.7 531.1,1428.2 541.5,1430.0 551.8,1434.1 562.1,1430.0 572.4,1430.0 582.8,1429.1 593.1,1432.9 603.4,1430.0 624.1,1430.0 634.4,1427.0 644.7,1425.8 656.5,1423.8 666.9,1423.8 687.5,1425.8 697.8,1424.7 700.0,1424.8 709.1,1424.8 719.7,1429.9 730.3,1427.8 740.9,1428.7 751.5,1428.7 762.1,1433.9 772.7,1429.9 783.3,1412.7 792.4,1411.8 804.5,1413.6 813.5,1409.0 824.1,1423.6 834.7,1424.8 845.3,1424.8 855.9,1426.9 866.5,1426.9 877.1,1427.8 887.7,1428.7 898.3,1428.7 908.9,1396.9 919.5,1394.5 930.1,1396.9 940.7,1393.0 951.3,1421.8 961.9,1421.8 972.5,1426.0 983.1,1421.8 993.7,1419.6 1004.3,1406.0 1014.9,1401.2 1025.5,1400.0 1036.1,1415.7 1046.7,1420.5 1057.3,1424.8 1067.9,1424.8 1077.0,1421.8 1087.6,1422.7 1098.2,1426.0 1108.8,1423.9 1130.0,1423.9 1140.6,1427.2 1151.2,1422.7 1161.8,1426.0 1172.4,1427.2 1183.0,1429.9 1193.6,1424.8 1204.1,1422.7 1214.7,1423.9 1223.8,1412.1 1234.4,1411.2 1245.0,1411.2 1257.1,1412.7 1266.2,1426.9 1276.8,1428.7 1287.4,1428.7 1298.0,1429.9 1308.6,1433.0 1319.2,1428.7 1329.8,1428.7 1340.4,1428.7 1351.0,1433.9 1361.6,1429.9 1381.3,1429.9 1393.4,1433.9 1402.5,1429.9 1413.1,1429.9 1423.7,1424.8" fill="none" stroke="#d8ae2e" stroke-width="2.6" stroke-linejoin="round"/><polygon points="899,1443 909,1431.5 940,1431.5 951,1443" fill="#ef843c" fill-opacity="0.45" stroke="#ef843c" stroke-width="2.4"/><polyline points="899,1443 909,1447.5 940,1447.5 951,1443" fill="none" stroke="#1f44b0" stroke-width="2.4"/><polyline points="1004,1443 1012,1441 1030,1440 1040,1443" fill="none" stroke="#c4162a" stroke-width="2"/><polyline points="1004,1443 1012,1447 1030,1447 1040,1443" fill="none" stroke="#ef843c" stroke-width="2"/><polyline points="457,1443 467,1444.6 497,1444.6 507,1443" fill="none" stroke="#1f44b0" stroke-width="2"/><polyline points="625,1443 635,1444.6 666,1444.6 676,1443" fill="none" stroke="#1f44b0" stroke-width="2"/><polyline points="776,1443 786,1444.4 811,1444.4 821,1443" fill="none" stroke="#1f44b0" stroke-width="2"/><polyline points="1130,1443 1140,1444.3 1150,1444.3 1160,1443" fill="none" stroke="#1f44b0" stroke-width="2"/><polyline points="1175,1443 1185,1444.5 1229,1444.5 1239,1443" fill="none" stroke="#1f44b0" stroke-width="2"/><polyline points="310,1443 320,1444.2 338,1444.2 348,1443" fill="none" stroke="#ef843c" stroke-width="2"/><polyline points="1380,1443 1390,1444.2 1410,1444.2 1420,1443" fill="none" stroke="#ef843c" stroke-width="2"/><polyline points="1414,1443 1424,1442" fill="none" stroke="#3b2a7a" stroke-width="2.4"/><line x1="165" y1="1443" x2="1424" y2="1443" stroke="#e0622f" stroke-width="2.6"/></svg>
<span class="t" style="left:73.35px;top:1379.57px;font-size:24.13px;color:#24292e;transform:scaleX(1.0615);-webkit-text-stroke:0.30px #24292e;">10 kb/s</span>
<span class="t" style="left:97.24px;top:1430.87px;font-size:24.13px;color:#24292e;transform:scaleX(1.1229);-webkit-text-stroke:0.30px #24292e;">0 b/s</span>
<span class="t" style="left:63.75px;top:1482.17px;font-size:24.13px;color:#24292e;transform:scaleX(1.0741);-webkit-text-stroke:0.30px #24292e;">-10 kb/s</span>
<span class="t" style="left:63.75px;top:1533.47px;font-size:24.13px;color:#24292e;transform:scaleX(1.0741);-webkit-text-stroke:0.30px #24292e;">-20 kb/s</span>
<svg style="position:absolute;left:0;top:0" width="2932" height="1546"><line x1="1579" y1="1371.8" x2="2875" y2="1371.8" stroke="rgba(36,41,46,0.11)" stroke-width="1.3"/><line x1="1579" y1="1430.9" x2="2875" y2="1430.9" stroke="rgba(36,41,46,0.11)" stroke-width="1.3"/><line x1="1579" y1="1490.0" x2="2875" y2="1490.0" stroke="rgba(36,41,46,0.11)" stroke-width="1.3"/><line x1="1579" y1="1549.1" x2="2875" y2="1549.1" stroke="rgba(36,41,46,0.11)" stroke-width="1.3"/><line x1="1628" y1="1371.8" x2="1628" y2="1546" stroke="rgba(36,41,46,0.11)" stroke-width="1.3"/><line x1="1844.6" y1="1371.8" x2="1844.6" y2="1546" stroke="rgba(36,41,46,0.11)" stroke-width="1.3"/><line x1="2060" y1="1371.8" x2="2060" y2="1546" stroke="rgba(36,41,46,0.11)" stroke-width="1.3"/><line x1="2276.5" y1="1371.8" x2="2276.5" y2="1546" stroke="rgba(36,41,46,0.11)" stroke-width="1.3"/><line x1="2492" y1="1371.8" x2="2492" y2="1546" stroke="rgba(36,41,46,0.11)" stroke-width="1.3"/><line x1="2708.4" y1="1371.8" x2="2708.4" y2="1546" stroke="rgba(36,41,46,0.11)" stroke-width="1.3"/></svg>
<span class="t" style="left:1501.69px;top:1359.67px;font-size:24.13px;color:#24292e;transform:scaleX(1.0404);-webkit-text-stroke:0.30px #24292e;">100%</span>
<span class="t" style="left:1512.85px;top:1418.77px;font-size:24.13px;color:#24292e;transform:scaleX(1.0995);-webkit-text-stroke:0.30px #24292e;">80%</span>
<span class="t" style="left:1512.65px;top:1477.87px;font-size:24.13px;color:#24292e;transform:scaleX(1.1037);-webkit-text-stroke:0.30px #24292e;">60%</span>
<span class="t" style="left:1513.40px;top:1536.97px;font-size:24.13px;color:#24292e;transform:scaleX(1.0879);-webkit-text-stroke:0.30px #24292e;">40%</span>
</body></html>
